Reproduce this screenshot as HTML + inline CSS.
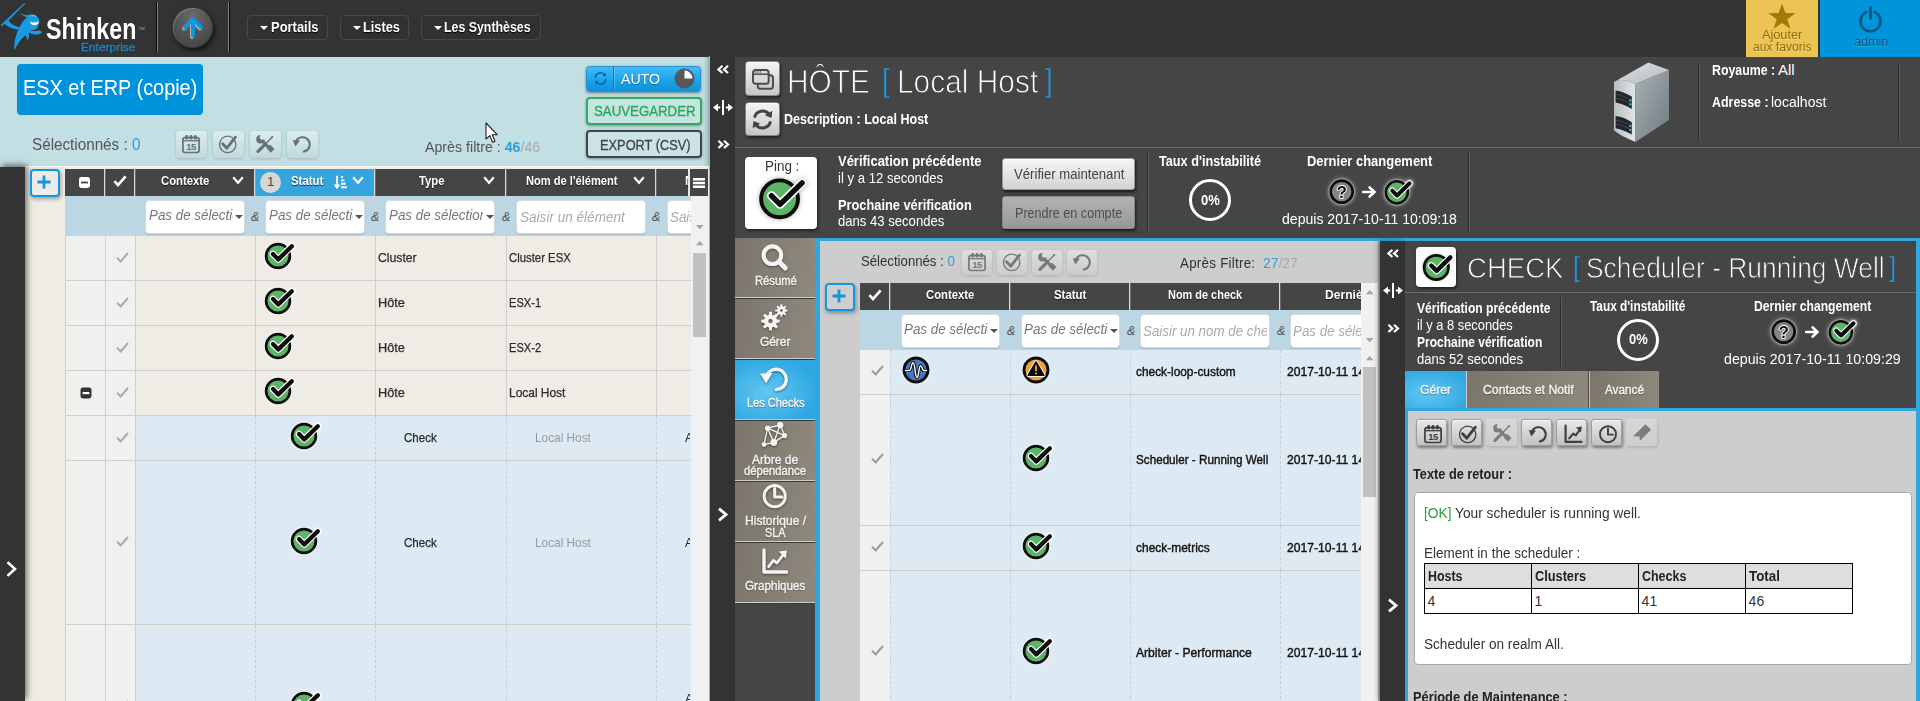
<!DOCTYPE html>
<html lang="fr"><head><meta charset="utf-8"><title>Shinken Enterprise</title>
<style>
html,body{margin:0;padding:0;background:#333;}
body{width:1920px;height:701px;overflow:hidden;font-family:"Liberation Sans",sans-serif;}
#app{position:relative;width:1920px;height:701px;overflow:hidden;background:#333;}
.b{position:absolute;box-sizing:border-box;}
.t{position:absolute;white-space:nowrap;transform-origin:0 50%;display:block;}
.ic{position:absolute;overflow:visible;}
.clip{overflow:hidden;}
.tbl{border-radius:4px;background:linear-gradient(180deg,rgba(255,255,255,.42),rgba(190,205,205,.35));box-shadow:0 1px 3px rgba(0,0,0,.18);}
.tbg{border-radius:4px;background:linear-gradient(180deg,rgba(255,255,255,.35),rgba(200,200,200,.3));box-shadow:0 1px 3px rgba(0,0,0,.15);}
.tbe{border:1px solid #9d9d9d;border-radius:3px;background:linear-gradient(180deg,#e8e8e8,#c2c2c2);box-shadow:1px 2px 3px rgba(0,0,0,.4), inset 0 1px 0 #f8f8f8;}
.tbd{border-radius:3px;background:linear-gradient(180deg,rgba(255,255,255,.22),rgba(200,200,200,.1));box-shadow:1px 2px 3px rgba(0,0,0,.12);}

</style></head>
<body>
<div id="app">
<!-- top bar -->
<div class="b" style="left:0px;top:0px;width:1920px;height:57px;background:#333;"></div>
<svg class="ic" style="left:0px;top:0px" width="46" height="56" viewBox="0 0 46 56" ><path d="M0.4 25.2 L24.6 2.8 L25.4 3.6 L8.6 20.6 C11 24.2 15 26.6 19.6 27.2 C21.8 22.6 24.6 19 27 17.4 C25.2 16.6 22.6 15.6 19.6 12.2 C22.4 14.4 24.6 15 27 15.2 C30.4 13.6 35.4 14.2 38 17.6 C40.4 21 39.4 25.6 36.8 28.2 C34.6 30.4 31.8 30.6 30.2 30.2 C32.6 31.2 36.6 31.4 39 30.6 L42.4 31.8 L41 33.6 L37.4 34.6 C34.2 35 30.8 34 28.6 32.6 C29.6 35 29.4 38 26.8 41 C27.2 38.6 26.8 36.6 25.6 35.4 C21.4 38 17.6 43.6 14.2 50.6 C14 44.6 14.8 38.6 16.8 33.6 C17.4 32 18 30.6 18.6 29.6 C13.4 29.4 8 27 4.6 24 L2 25.8 Z" fill="#189ae2"/><path d="M29.6 21.4 C32.4 23 36 22.8 38.8 21.2 C38.6 23.6 36.6 25.2 34.4 25.2 C32.2 25.2 30.4 23.6 29.6 21.4 Z" fill="#fff"/><path d="M29 16.6 C31.6 14.8 35.2 15 37 16.8 C34.6 15.9 31.8 16 29 16.6 Z" fill="#7fd0ff" opacity=".8"/></svg>
<span class="t" id="t0" style="left:46.00px;top:12.00px;font-size:29px;line-height:35px;color:#fff;font-weight:700;transform:scaleX(0.8009);">Shinken</span>
<span class="t" id="t1" style="left:138.00px;top:26.00px;font-size:7px;line-height:8px;color:#999;transform:scaleX(1.0000);">™</span>
<span class="t" id="t2" style="left:81.00px;top:40.00px;font-size:11.5px;line-height:14px;color:#1b86c4;transform:scaleX(1.0385);-webkit-text-stroke:.3px #1b86c4;">Enterprise</span>
<div class="b" style="left:156px;top:2px;width:2px;height:50px;background:linear-gradient(90deg,#0a0a0a 0,#0a0a0a 50%,#808080 50%);"></div>
<div class="b" style="left:228px;top:2px;width:2px;height:50px;background:linear-gradient(90deg,#808080 0,#808080 50%,#0a0a0a 50%);"></div>
<div class="b" style="left:171.6px;top:6.6px;width:41.8px;height:41.8px;border-radius:50%;background:radial-gradient(circle at 50% 22%,#6a6a6a,#4e4e4e 60%,#444 100%);border:1px solid #3a3a3a;box-shadow:2px 3px 5px rgba(0,0,0,.6), inset 1px 1px 0 rgba(255,255,255,.22);"><svg class="ic" style="left:9px;top:8.6px;filter:drop-shadow(-.6px 1px 0 rgba(200,200,200,.85))" width="22" height="22" viewBox="0 0 22 22"><path d="M11 20 L11 4 M3 11.4 L11 3.2 L19 11.4" fill="none" stroke="#0a96e0" stroke-width="3.8" stroke-linecap="round" stroke-linejoin="miter"/></svg></div>
<div class="b" style="left:247px;top:15px;width:81px;height:25px;border:1px solid #484848;border-radius:4px;background:#313131;"></div>
<svg class="ic" style="left:260.4px;top:26px" width="8" height="4" viewBox="0 0 8 4"><path d="M0 0 L8 0 L4 4 Z" fill="#fff"/></svg>
<span class="t" id="t3" style="left:270.50px;top:18.00px;font-size:15px;line-height:18px;color:#fff;font-weight:700;transform:scaleX(0.8636);text-shadow:0 1px 1px #000;">Portails</span>
<div class="b" style="left:340px;top:15px;width:69px;height:25px;border:1px solid #484848;border-radius:4px;background:#313131;"></div>
<svg class="ic" style="left:353px;top:26px" width="8" height="4" viewBox="0 0 8 4"><path d="M0 0 L8 0 L4 4 Z" fill="#fff"/></svg>
<span class="t" id="t4" style="left:363.00px;top:18.00px;font-size:15px;line-height:18px;color:#fff;font-weight:700;transform:scaleX(0.8488);text-shadow:0 1px 1px #000;">Listes</span>
<div class="b" style="left:421px;top:15px;width:120px;height:25px;border:1px solid #484848;border-radius:4px;background:#313131;"></div>
<svg class="ic" style="left:434px;top:26px" width="8" height="4" viewBox="0 0 8 4"><path d="M0 0 L8 0 L4 4 Z" fill="#fff"/></svg>
<span class="t" id="t5" style="left:444.00px;top:18.00px;font-size:15px;line-height:18px;color:#fff;font-weight:700;transform:scaleX(0.8238);text-shadow:0 1px 1px #000;">Les Synthèses</span>
<div class="b" style="left:1746px;top:0px;width:72px;height:57px;background:#ecc453;"><svg class="ic" style="left:22px;top:3px" width="28" height="27" viewBox="0 0 28 27"><path d="M14 0.6 L17.4 10 L27.4 10.2 L19.4 16.2 L22.4 25.8 L14 20 L5.6 25.8 L8.6 16.2 L0.6 10.2 L10.6 10 Z" fill="#a17a06"/></svg></div>
<span class="t" id="t6" style="left:1762.00px;top:27.00px;font-size:13px;line-height:16px;color:#8d6b05;transform:scaleX(0.9756);text-shadow:0 1px 0 rgba(255,255,255,.35);">Ajouter</span>
<span class="t" id="t7" style="left:1753.00px;top:40.00px;font-size:12.5px;line-height:15px;color:#8d6b05;transform:scaleX(0.9667);text-shadow:0 1px 0 rgba(255,255,255,.35);">aux favoris</span>
<div class="b" style="left:1820px;top:0px;width:100px;height:57px;background:#0094da;"><svg class="ic" style="left:38px;top:5px" width="25" height="28" viewBox="0 0 25 28"><path d="M8.2 7.2 A10 10 0 1 0 16.8 7.2" fill="none" stroke="#08577f" stroke-width="2.6" stroke-linecap="round"/><path d="M12.5 2.2 L12.5 13.4" stroke="#08577f" stroke-width="2.6" stroke-linecap="round"/></svg></div>
<span class="t" id="t8" style="left:1854.00px;top:34.00px;font-size:13px;line-height:16px;color:#08577f;transform:scaleX(0.9714);text-shadow:0 1px 0 rgba(255,255,255,.25);">admin</span>
<!-- left panel -->
<div class="b" style="left:0px;top:57px;width:710px;height:644px;background:#c2dfe3;"></div>
<div class="b" style="left:703px;top:57px;width:7px;height:110px;background:linear-gradient(90deg,rgba(0,0,0,0),rgba(0,0,0,.10) 60%,rgba(0,0,0,.32));"></div>
<div class="b" style="left:17px;top:64px;width:186px;height:51px;background:#0093dc;border-radius:4px;"></div>
<span class="t" id="t9" style="left:23.00px;top:75.00px;font-size:22px;line-height:26px;color:#fff;transform:scaleX(0.9041);">ESX et ERP (copie)</span>
<div class="b" style="left:586px;top:66px;width:115px;height:26px;border-radius:3.5px;background:linear-gradient(180deg,#40bdf8,#1ba3ea 55%,#0c93dc);border:1px solid #2b8fd0;box-shadow:0 1px 3px rgba(0,0,0,.45);"><div class="b" style="left:26px;top:0;width:1px;height:23px;background:#0a76b6;box-shadow:1px 0 0 rgba(255,255,255,.25)"></div><svg class="ic" style="left:6px;top:4px" width="15" height="15" viewBox="0 0 15 15"><path d="M2.2 6.4 A5.4 5.4 0 0 1 12 4.2 M12.8 8.6 A5.4 5.4 0 0 1 3 10.8" fill="none" stroke="#11608f" stroke-width="1.5" stroke-linecap="round"/><path d="M12.9 1.8 L12.6 5.4 L9.4 4.4 Z M2.1 13.2 L2.4 9.6 L5.6 10.6 Z" fill="#11608f"/></svg><svg class="ic" style="left:87px;top:1px" width="21" height="21" viewBox="0 0 21 21"><circle cx="10.5" cy="10.5" r="10" fill="#585858"/><path d="M10.5 10.5 L10.5 2.6 A7.9 7.9 0 0 1 18.4 10.5 Z" fill="#fff"/></svg></div>
<span class="t" id="t10" style="left:621.00px;top:70.00px;font-size:15px;line-height:18px;color:#fff;transform:scaleX(0.9390);text-shadow:0 1px 1px rgba(0,0,0,.4);">AUTO</span>
<div class="b" style="left:586px;top:97px;width:116px;height:28px;border:2.4px solid #2fab5b;border-radius:4px;background:#c6e5e2;box-shadow:0 1px 3px rgba(0,0,0,.35);"></div>
<span class="t" id="t11" style="left:594.00px;top:102.00px;font-size:15px;line-height:18px;color:#2ca85a;transform:scaleX(0.8826);-webkit-text-stroke:.35px #2ca85a;">SAUVEGARDER</span>
<div class="b" style="left:586px;top:130px;width:116px;height:28px;border:2.4px solid #454545;border-radius:4px;background:#c9e3e7;box-shadow:0 1px 3px rgba(0,0,0,.35);"></div>
<span class="t" id="t12" style="left:599.50px;top:136.00px;font-size:15px;line-height:18px;color:#444;transform:scaleX(0.8538);-webkit-text-stroke:.3px #444;">EXPORT (CSV)</span>
<span class="t" id="t13" style="left:32.00px;top:135.00px;font-size:16px;line-height:19px;color:#555;transform:scaleX(0.9518);">Sélectionnés : <span style="color:#2b9fd9">0</span></span>
<span class="t" id="t14" style="left:425.00px;top:138.00px;font-size:15px;line-height:18px;color:#555;transform:scaleX(0.9467);">Après filtre : <span style="color:#2b9fd9;font-weight:700">46</span><span style="color:#a9abab">/46</span></span>
<div class="b tbl" style="left:175.5px;top:131px;width:31px;height:26.5px;"><svg class="ic" style="left:5.5px;top:3.2px" width="20" height="20" viewBox="0 0 20 20"><rect x="1.9" y="3.7" width="16.2" height="14.8" rx="2.2" fill="none" stroke="#617578" stroke-width="1.7"/><path d="M2 6.7 H18" stroke="#617578" stroke-width="1.3"/><rect x="4.3" y="1" width="2.7" height="4.4" rx="1.2" fill="#617578"/><rect x="8.65" y="1" width="2.7" height="4.4" rx="1.2" fill="#617578"/><rect x="13" y="1" width="2.7" height="4.4" rx="1.2" fill="#617578"/><text x="10" y="15.9" text-anchor="middle" font-family="Liberation Sans, sans-serif" font-weight="bold" font-size="9.4" letter-spacing="-.4" fill="#617578">15</text></svg></div>
<div class="b tbl" style="left:212.5px;top:131px;width:31px;height:26.5px;"><svg class="ic" style="left:5.5px;top:3.2px" width="20" height="20" viewBox="0 0 20 20"><circle cx="9.7" cy="10.4" r="8.2" fill="none" stroke="#617578" stroke-width="1.3"/><path d="M4.6 9.8 L8.8 14.2 L17.4 3.2" fill="none" stroke="#617578" stroke-width="2.8" stroke-linecap="round" stroke-linejoin="round"/></svg></div>
<div class="b tbl" style="left:249.5px;top:131px;width:31px;height:26.5px;"><svg class="ic" style="left:5.5px;top:3.2px" width="20" height="20" viewBox="0 0 20 20"><path d="M3 17.4 L10.6 9.8" stroke="#617578" stroke-width="3.2" stroke-linecap="round"/><path d="M10.6 9.8 L17 3.2" stroke="#617578" stroke-width="1.3" stroke-linecap="round"/><circle cx="17.2" cy="3" r="1" fill="#617578"/><path d="M6.4 6 L14.2 14" stroke="#617578" stroke-width="3.2" stroke-linecap="butt"/><path d="M5.4 0.9 A4.3 4.3 0 1 0 9.8 5.4 L6.7 6.3 L4.6 4 Z" fill="#617578"/><rect x="12.4" y="12.2" width="6.2" height="5" transform="rotate(45 15.5 14.7)" fill="#617578"/></svg></div>
<div class="b tbl" style="left:286.5px;top:131px;width:31px;height:26.5px;"><svg class="ic" style="left:5.5px;top:3.2px" width="20" height="20" viewBox="0 0 20 20"><path d="M4 7.4 A7.2 7.2 0 1 1 11.8 17.5" fill="none" stroke="#617578" stroke-width="2.1" stroke-linecap="round"/><path d="M0.8 6.2 L8 6.6 L3.4 12.4 Z" fill="#617578"/></svg></div>
<svg class="ic" style="left:485px;top:122px" width="14" height="22" viewBox="0 0 14 22"><path d="M1 1 L1 17 L4.8 13.6 L7.6 20.2 L10 19.2 L7.2 12.8 L12.2 12.6 Z" fill="#fff" stroke="#222" stroke-width="1.1" stroke-linejoin="round"/></svg>
<div class="b" style="left:25px;top:167px;width:685px;height:534px;background:#efece5;box-shadow:0 -1px 0 #f6f6f3;"></div>
<div class="b" style="left:0px;top:167px;width:25px;height:534px;background:#333;box-shadow:2px -2px 6px rgba(0,0,0,.55);"></div>
<svg class="ic" style="left:6px;top:561px" width="12" height="16" viewBox="0 0 12 16"><path d="M2.4 2 L9 8 L2.4 14" fill="none" stroke="#fff" stroke-width="2.6" stroke-linecap="square" stroke-linejoin="miter"/></svg>
<div class="b" style="left:30px;top:169px;width:30px;height:28px;border:2.6px solid #1497dd;border-radius:4px;background:#ecebe7;box-shadow:1px 2px 4px rgba(0,0,0,.35);"><svg class="ic" style="left:5.4px;top:4.4px" width="14" height="14" viewBox="0 0 14 14"><path d="M7 0.5 L7 13.5 M0.5 7 L13.5 7" stroke="#1497dd" stroke-width="2.8"/></svg></div>
<div class="b clip" style="left:65px;top:169px;width:623px;height:27px;background:#454545;"></div>
<div class="b" style="left:688px;top:169px;width:2px;height:27px;background:#e6e6e4;"></div>
<div class="b" style="left:255px;top:169px;width:120px;height:27px;background:#35a5de;"></div>
<div class="b" style="left:104px;top:169px;width:1px;height:27px;background:#d9d9d9;box-shadow:1px 0 0 rgba(217,217,217,.25);"></div>
<div class="b" style="left:134px;top:169px;width:1px;height:27px;background:#d9d9d9;box-shadow:1px 0 0 rgba(217,217,217,.25);"></div>
<div class="b" style="left:254px;top:169px;width:1px;height:27px;background:#d9d9d9;box-shadow:1px 0 0 rgba(217,217,217,.25);"></div>
<div class="b" style="left:374px;top:169px;width:1px;height:27px;background:#d9d9d9;box-shadow:1px 0 0 rgba(217,217,217,.25);"></div>
<div class="b" style="left:505px;top:169px;width:1px;height:27px;background:#d9d9d9;box-shadow:1px 0 0 rgba(217,217,217,.25);"></div>
<div class="b" style="left:655px;top:169px;width:1px;height:27px;background:#d9d9d9;box-shadow:1px 0 0 rgba(217,217,217,.25);"></div>
<div class="b" style="left:690px;top:169px;width:18px;height:27px;background:#454545;"><svg class="ic" style="left:3px;top:9px" width="12" height="10" viewBox="0 0 12 10"><path d="M0 1.25 H12 M0 5 H12 M0 8.75 H12" stroke="#fff" stroke-width="2.5"/></svg></div>
<svg class="ic" style="left:79px;top:177px" width="11" height="11" viewBox="0 0 11 11"><rect x="0" y="0" width="11" height="11" rx="2.4" fill="#fff"/><rect x="2" y="4.6" width="7" height="1.8" fill="#454545"/></svg>
<svg class="ic" style="left:113px;top:175px" width="14" height="12" viewBox="0 0 14 12"><path d="M1.4 6.2 L5 10 L12.6 1.4" fill="none" stroke="#fff" stroke-width="2.6" stroke-linejoin="miter"/></svg>
<span class="t" id="t15" style="left:161.00px;top:173.00px;font-size:13px;line-height:16px;color:#fff;font-weight:700;transform:scaleX(0.8696);text-shadow:0 1px 1px rgba(0,0,0,.7);">Contexte</span>
<svg class="ic" style="left:232px;top:176px" width="12" height="9" viewBox="0 0 12 9"><path d="M1.2 1.2 L6 6.8 L10.8 1.2" fill="none" stroke="#fff" stroke-width="2.1" stroke-linejoin="miter"/></svg>
<div class="b" style="left:260px;top:171.5px;width:21px;height:21px;border-radius:50%;background:#d6d6d6;"></div>
<span class="t" id="t16" style="left:267.00px;top:174.00px;font-size:13px;line-height:16px;color:#444;transform:scaleX(1.0000);">1</span>
<span class="t" id="t17" style="left:290.50px;top:173.00px;font-size:13px;line-height:16px;color:#fff;font-weight:700;transform:scaleX(0.8784);text-shadow:0 1px 1px rgba(0,0,0,.7);">Statut</span>
<svg class="ic" style="left:334px;top:175px" width="13" height="14" viewBox="0 0 13 14"><path d="M3 0.8 L3 12 M0.6 9.6 L3 12.8 L5.4 9.6" fill="none" stroke="#fff" stroke-width="1.7"/><path d="M7 2 H9 M7 5.4 H10.4 M7 8.8 H11.6 M7 12.2 H12.8" stroke="#fff" stroke-width="1.9"/></svg>
<svg class="ic" style="left:351.5px;top:176px" width="12" height="9" viewBox="0 0 12 9"><path d="M1.2 1.2 L6 6.8 L10.8 1.2" fill="none" stroke="#fff" stroke-width="2.1" stroke-linejoin="miter"/></svg>
<span class="t" id="t18" style="left:419.00px;top:173.00px;font-size:13px;line-height:16px;color:#fff;font-weight:700;transform:scaleX(0.8690);text-shadow:0 1px 1px rgba(0,0,0,.7);">Type</span>
<svg class="ic" style="left:483px;top:176px" width="12" height="9" viewBox="0 0 12 9"><path d="M1.2 1.2 L6 6.8 L10.8 1.2" fill="none" stroke="#fff" stroke-width="2.1" stroke-linejoin="miter"/></svg>
<span class="t" id="t19" style="left:525.80px;top:173.00px;font-size:13px;line-height:16px;color:#fff;font-weight:700;transform:scaleX(0.8542);text-shadow:0 1px 1px rgba(0,0,0,.7);">Nom de l'élément</span>
<svg class="ic" style="left:632.5px;top:176px" width="12" height="9" viewBox="0 0 12 9"><path d="M1.2 1.2 L6 6.8 L10.8 1.2" fill="none" stroke="#fff" stroke-width="2.1" stroke-linejoin="miter"/></svg>
<div class="b clip" style="left:656px;top:169px;width:32px;height:27px;"><span class="t" id="t20" style="left:28.80px;top:4.00px;font-size:13px;line-height:16px;color:#fff;font-weight:700;transform:scaleX(0.9300);text-shadow:0 1px 1px rgba(0,0,0,.7);">Nom</span></div>
<div class="b" style="left:65px;top:196px;width:626px;height:40px;background:#bdd6e3;"></div>
<div class="b" style="left:145.3px;top:200.2px;width:99.5px;height:33.599999999999994px;background:#fff;border-radius:4px;border:1px solid #d5dbde;box-shadow:0 1px 1px rgba(0,0,0,.12);"><div class="b clip" style="left:0;top:0;width:86.5px;height:31.599999999999994px"><span class="t" id="t21" style="left:2.70px;top:5.80px;font-size:14px;line-height:17px;color:#777;font-style:italic;transform:scaleX(0.9550);">Pas de sélection</span></div><svg class="ic" style="left:88.9px;top:13.4px" width="8" height="4" viewBox="0 0 8 4"><path d="M0 0 L8 0 L4 4 Z" fill="#555"/></svg></div>
<span class="t" id="t22" style="left:251.00px;top:210.00px;font-size:12.5px;line-height:15px;color:#555;font-style:italic;transform:scaleX(1.0000);">&amp;</span>
<div class="b" style="left:265.3px;top:200.2px;width:99.5px;height:33.599999999999994px;background:#fff;border-radius:4px;border:1px solid #d5dbde;box-shadow:0 1px 1px rgba(0,0,0,.12);"><div class="b clip" style="left:0;top:0;width:86.5px;height:31.599999999999994px"><span class="t" id="t23" style="left:2.70px;top:5.80px;font-size:14px;line-height:17px;color:#777;font-style:italic;transform:scaleX(0.9550);">Pas de sélection</span></div><svg class="ic" style="left:88.9px;top:13.4px" width="8" height="4" viewBox="0 0 8 4"><path d="M0 0 L8 0 L4 4 Z" fill="#555"/></svg></div>
<span class="t" id="t24" style="left:371.00px;top:210.00px;font-size:12.5px;line-height:15px;color:#555;font-style:italic;transform:scaleX(1.0000);">&amp;</span>
<div class="b" style="left:385.1px;top:200.2px;width:110.39999999999998px;height:33.599999999999994px;background:#fff;border-radius:4px;border:1px solid #d5dbde;box-shadow:0 1px 1px rgba(0,0,0,.12);"><div class="b clip" style="left:0;top:0;width:97.39999999999998px;height:31.599999999999994px"><span class="t" id="t25" style="left:2.70px;top:5.80px;font-size:14px;line-height:17px;color:#777;font-style:italic;transform:scaleX(0.9550);">Pas de sélection</span></div><svg class="ic" style="left:99.79999999999998px;top:13.4px" width="8" height="4" viewBox="0 0 8 4"><path d="M0 0 L8 0 L4 4 Z" fill="#555"/></svg></div>
<span class="t" id="t26" style="left:502.00px;top:210.00px;font-size:12.5px;line-height:15px;color:#555;font-style:italic;transform:scaleX(1.0000);">&amp;</span>
<div class="b" style="left:516.2px;top:200.2px;width:129.5999999999999px;height:33.599999999999994px;background:#fff;border-radius:4px;border:1px solid #d5dbde;box-shadow:0 1px 1px rgba(0,0,0,.12);"><div class="b clip" style="left:0;top:0;width:125.59999999999991px;height:31.599999999999994px"><span class="t" id="t27" style="left:2.40px;top:7.80px;font-size:14.5px;line-height:17px;color:#aaa;font-style:italic;transform:scaleX(0.9357);">Saisir un élément</span></div></div>
<span class="t" id="t28" style="left:652.00px;top:210.00px;font-size:12.5px;line-height:15px;color:#555;font-style:italic;transform:scaleX(1.0000);">&amp;</span>
<div class="b" style="left:666.5px;top:200.2px;width:94.0px;height:33.599999999999994px;background:#fff;border-radius:4px;border:1px solid #d5dbde;box-shadow:0 1px 1px rgba(0,0,0,.12);clip-path:inset(-3px 69.5px -3px -3px);"><div class="b clip" style="left:0;top:0;width:90.0px;height:31.599999999999994px"><span class="t" id="t29" style="left:2.40px;top:7.80px;font-size:14.5px;line-height:17px;color:#aaa;font-style:italic;transform:scaleX(0.9200);">Saisir un nom</span></div></div>
<div class="b" style="left:691px;top:196px;width:17px;height:505px;background:#f1f1f1;"></div>
<svg class="ic" style="left:695.8px;top:225.4px" width="7.5" height="4.2" viewBox="0 0 7.5 4.2"><path d="M0 0 L7.5 0 L3.75 4.2 Z" fill="#a3a3a3"/></svg>
<svg class="ic" style="left:695.8px;top:241.4px" width="7.5" height="4.2" viewBox="0 0 7.5 4.2"><path d="M0 4.2 L3.75 0 L7.5 4.2 Z" fill="#a3a3a3"/></svg>
<div class="b" style="left:693px;top:253px;width:13px;height:84px;background:#c1c1c1;"></div>
<div class="b clip" style="left:65px;top:236px;width:626px;height:465px">
<div class="b" style="left:0;top:0px;width:626px;height:45px;border-bottom:1px solid #cfcfcd;">
<div class="b" style="left:0px;top:0px;width:40px;height:44px;background:#f0f0ee;border-left:1px solid #cfcfcd;"></div>
<div class="b" style="left:40px;top:0px;width:30px;height:44px;background:#f0f0ee;border-left:1px solid #cfcfcd;"></div>
<div class="b" style="left:70px;top:0px;width:556px;height:44px;background:#efece5;border-left:1px solid #cfcfcd;"></div>
<div class="b" style="left:190px;top:0px;width:1px;height:44px;background:#cfcfcd;"></div>
<div class="b" style="left:310px;top:0px;width:1px;height:44px;background:#cfcfcd;"></div>
<div class="b" style="left:441px;top:0px;width:1px;height:44px;background:#cfcfcd;"></div>
<div class="b" style="left:591px;top:0px;width:1px;height:44px;background:#cfcfcd;"></div>
</div>
<div class="b" style="left:0;top:45px;width:626px;height:45px;border-bottom:1px solid #cfcfcd;">
<div class="b" style="left:0px;top:0px;width:40px;height:44px;background:#f0f0ee;border-left:1px solid #cfcfcd;"></div>
<div class="b" style="left:40px;top:0px;width:30px;height:44px;background:#f0f0ee;border-left:1px solid #cfcfcd;"></div>
<div class="b" style="left:70px;top:0px;width:556px;height:44px;background:#efece5;border-left:1px solid #cfcfcd;"></div>
<div class="b" style="left:190px;top:0px;width:1px;height:44px;background:#cfcfcd;"></div>
<div class="b" style="left:310px;top:0px;width:1px;height:44px;background:#cfcfcd;"></div>
<div class="b" style="left:441px;top:0px;width:1px;height:44px;background:#cfcfcd;"></div>
<div class="b" style="left:591px;top:0px;width:1px;height:44px;background:#cfcfcd;"></div>
</div>
<div class="b" style="left:0;top:90px;width:626px;height:45px;border-bottom:1px solid #cfcfcd;">
<div class="b" style="left:0px;top:0px;width:40px;height:44px;background:#f0f0ee;border-left:1px solid #cfcfcd;"></div>
<div class="b" style="left:40px;top:0px;width:30px;height:44px;background:#f0f0ee;border-left:1px solid #cfcfcd;"></div>
<div class="b" style="left:70px;top:0px;width:556px;height:44px;background:#efece5;border-left:1px solid #cfcfcd;"></div>
<div class="b" style="left:190px;top:0px;width:1px;height:44px;background:#cfcfcd;"></div>
<div class="b" style="left:310px;top:0px;width:1px;height:44px;background:#cfcfcd;"></div>
<div class="b" style="left:441px;top:0px;width:1px;height:44px;background:#cfcfcd;"></div>
<div class="b" style="left:591px;top:0px;width:1px;height:44px;background:#cfcfcd;"></div>
</div>
<div class="b" style="left:0;top:135px;width:626px;height:45px;border-bottom:1px solid #cfcfcd;">
<div class="b" style="left:0px;top:0px;width:40px;height:44px;background:#f0f0ee;border-left:1px solid #cfcfcd;"></div>
<div class="b" style="left:40px;top:0px;width:30px;height:44px;background:#f0f0ee;border-left:1px solid #cfcfcd;"></div>
<div class="b" style="left:70px;top:0px;width:556px;height:44px;background:#efece5;border-left:1px solid #cfcfcd;"></div>
<div class="b" style="left:190px;top:0px;width:1px;height:44px;background:#cfcfcd;"></div>
<div class="b" style="left:310px;top:0px;width:1px;height:44px;background:#cfcfcd;"></div>
<div class="b" style="left:441px;top:0px;width:1px;height:44px;background:#cfcfcd;"></div>
<div class="b" style="left:591px;top:0px;width:1px;height:44px;background:#cfcfcd;"></div>
</div>
<div class="b" style="left:0;top:180px;width:626px;height:45px;border-bottom:1px solid #cfcfcd;">
<div class="b" style="left:0px;top:0px;width:40px;height:44px;background:#f0f0ee;border-left:1px solid #cfcfcd;"></div>
<div class="b" style="left:40px;top:0px;width:30px;height:44px;background:#f0f0ee;border-left:1px solid #cfcfcd;"></div>
<div class="b" style="left:70px;top:0px;width:556px;height:44px;background:#ddeaf3;border-left:1px solid #cfcfcd;"></div>
<div class="b" style="left:190px;top:0px;width:0px;height:44px;border-left:1px dashed #c9cfd6;"></div>
<div class="b" style="left:310px;top:0px;width:0px;height:44px;border-left:1px dashed #c9cfd6;"></div>
<div class="b" style="left:441px;top:0px;width:0px;height:44px;border-left:1px dashed #c9cfd6;"></div>
<div class="b" style="left:591px;top:0px;width:0px;height:44px;border-left:1px dashed #c9cfd6;"></div>
</div>
<div class="b" style="left:0;top:225px;width:626px;height:164px;border-bottom:1px solid #cfcfcd;">
<div class="b" style="left:0px;top:0px;width:40px;height:163px;background:#f0f0ee;border-left:1px solid #cfcfcd;"></div>
<div class="b" style="left:40px;top:0px;width:30px;height:163px;background:#f0f0ee;border-left:1px solid #cfcfcd;"></div>
<div class="b" style="left:70px;top:0px;width:556px;height:163px;background:#ddeaf3;border-left:1px solid #cfcfcd;"></div>
<div class="b" style="left:190px;top:0px;width:0px;height:163px;border-left:1px dashed #c9cfd6;"></div>
<div class="b" style="left:310px;top:0px;width:0px;height:163px;border-left:1px dashed #c9cfd6;"></div>
<div class="b" style="left:441px;top:0px;width:0px;height:163px;border-left:1px dashed #c9cfd6;"></div>
<div class="b" style="left:591px;top:0px;width:0px;height:163px;border-left:1px dashed #c9cfd6;"></div>
</div>
<div class="b" style="left:0;top:389px;width:626px;height:164px;border-bottom:1px solid #cfcfcd;">
<div class="b" style="left:0px;top:0px;width:40px;height:163px;background:#f0f0ee;border-left:1px solid #cfcfcd;"></div>
<div class="b" style="left:40px;top:0px;width:30px;height:163px;background:#f0f0ee;border-left:1px solid #cfcfcd;"></div>
<div class="b" style="left:70px;top:0px;width:556px;height:163px;background:#ddeaf3;border-left:1px solid #cfcfcd;"></div>
<div class="b" style="left:190px;top:0px;width:0px;height:163px;border-left:1px dashed #c9cfd6;"></div>
<div class="b" style="left:310px;top:0px;width:0px;height:163px;border-left:1px dashed #c9cfd6;"></div>
<div class="b" style="left:441px;top:0px;width:0px;height:163px;border-left:1px dashed #c9cfd6;"></div>
<div class="b" style="left:591px;top:0px;width:0px;height:163px;border-left:1px dashed #c9cfd6;"></div>
</div>
</div>
<svg class="ic" style="left:115.5px;top:251.5px" width="13" height="11" viewBox="0 0 13 11"><path d="M1 5.6 L4.6 9.4 L12 1" fill="none" stroke="#a9a9a9" stroke-width="2"/></svg>
<svg class="ic" style="left:262.30px;top:234.00px;filter:drop-shadow(0 0 1.6px #fff)" width="40.00" height="40.00" viewBox="0 0 40 40"><circle cx="16" cy="22" r="11.90" fill="#5cb466" stroke="#0d0d0d" stroke-width="2.7"/><path  d="M11 20.1 L16.3 25.4 L29.8 12.2" fill="none" stroke="#fff" stroke-width="6.60" stroke-linecap="round" stroke-linejoin="round"/><path  d="M11 20.1 L16.3 25.4 L29.8 12.2" fill="none" stroke="#0d0d0d" stroke-width="4.30" stroke-linecap="round" stroke-linejoin="round"/></svg>
<span class="t" id="t30" style="left:378.00px;top:250.00px;font-size:13px;line-height:16px;color:#2a2a2a;transform:scaleX(0.9390);-webkit-text-stroke:.25px #2a2a2a;">Cluster</span>
<span class="t" id="t31" style="left:509.00px;top:250.00px;font-size:13px;line-height:16px;color:#2a2a2a;transform:scaleX(0.8732);-webkit-text-stroke:.25px #2a2a2a;">Cluster ESX</span>
<svg class="ic" style="left:115.5px;top:296.5px" width="13" height="11" viewBox="0 0 13 11"><path d="M1 5.6 L4.6 9.4 L12 1" fill="none" stroke="#a9a9a9" stroke-width="2"/></svg>
<svg class="ic" style="left:262.30px;top:279.00px;filter:drop-shadow(0 0 1.6px #fff)" width="40.00" height="40.00" viewBox="0 0 40 40"><circle cx="16" cy="22" r="11.90" fill="#5cb466" stroke="#0d0d0d" stroke-width="2.7"/><path  d="M11 20.1 L16.3 25.4 L29.8 12.2" fill="none" stroke="#fff" stroke-width="6.60" stroke-linecap="round" stroke-linejoin="round"/><path  d="M11 20.1 L16.3 25.4 L29.8 12.2" fill="none" stroke="#0d0d0d" stroke-width="4.30" stroke-linecap="round" stroke-linejoin="round"/></svg>
<span class="t" id="t32" style="left:378.00px;top:295.00px;font-size:13px;line-height:16px;color:#2a2a2a;transform:scaleX(0.9815);-webkit-text-stroke:.25px #2a2a2a;">Hôte</span>
<span class="t" id="t33" style="left:509.00px;top:295.00px;font-size:13px;line-height:16px;color:#2a2a2a;transform:scaleX(0.8553);-webkit-text-stroke:.25px #2a2a2a;">ESX-1</span>
<svg class="ic" style="left:115.5px;top:341.5px" width="13" height="11" viewBox="0 0 13 11"><path d="M1 5.6 L4.6 9.4 L12 1" fill="none" stroke="#a9a9a9" stroke-width="2"/></svg>
<svg class="ic" style="left:262.30px;top:324.00px;filter:drop-shadow(0 0 1.6px #fff)" width="40.00" height="40.00" viewBox="0 0 40 40"><circle cx="16" cy="22" r="11.90" fill="#5cb466" stroke="#0d0d0d" stroke-width="2.7"/><path  d="M11 20.1 L16.3 25.4 L29.8 12.2" fill="none" stroke="#fff" stroke-width="6.60" stroke-linecap="round" stroke-linejoin="round"/><path  d="M11 20.1 L16.3 25.4 L29.8 12.2" fill="none" stroke="#0d0d0d" stroke-width="4.30" stroke-linecap="round" stroke-linejoin="round"/></svg>
<span class="t" id="t34" style="left:378.00px;top:340.00px;font-size:13px;line-height:16px;color:#2a2a2a;transform:scaleX(0.9815);-webkit-text-stroke:.25px #2a2a2a;">Hôte</span>
<span class="t" id="t35" style="left:509.00px;top:340.00px;font-size:13px;line-height:16px;color:#2a2a2a;transform:scaleX(0.8553);-webkit-text-stroke:.25px #2a2a2a;">ESX-2</span>
<svg class="ic" style="left:115.5px;top:386.5px" width="13" height="11" viewBox="0 0 13 11"><path d="M1 5.6 L4.6 9.4 L12 1" fill="none" stroke="#a9a9a9" stroke-width="2"/></svg>
<svg class="ic" style="left:80px;top:387.0px" width="12" height="12" viewBox="0 0 12 12"><rect x="0.5" y="0.5" width="11" height="11" rx="2.4" fill="#333"/><rect x="2.6" y="5" width="6.8" height="2.2" fill="#fff"/></svg>
<svg class="ic" style="left:262.30px;top:369.00px;filter:drop-shadow(0 0 1.6px #fff)" width="40.00" height="40.00" viewBox="0 0 40 40"><circle cx="16" cy="22" r="11.90" fill="#5cb466" stroke="#0d0d0d" stroke-width="2.7"/><path  d="M11 20.1 L16.3 25.4 L29.8 12.2" fill="none" stroke="#fff" stroke-width="6.60" stroke-linecap="round" stroke-linejoin="round"/><path  d="M11 20.1 L16.3 25.4 L29.8 12.2" fill="none" stroke="#0d0d0d" stroke-width="4.30" stroke-linecap="round" stroke-linejoin="round"/></svg>
<span class="t" id="t36" style="left:378.00px;top:385.00px;font-size:13px;line-height:16px;color:#2a2a2a;transform:scaleX(0.9815);-webkit-text-stroke:.25px #2a2a2a;">Hôte</span>
<span class="t" id="t37" style="left:509.00px;top:385.00px;font-size:13px;line-height:16px;color:#2a2a2a;transform:scaleX(0.9180);-webkit-text-stroke:.25px #2a2a2a;">Local Host</span>
<svg class="ic" style="left:115.5px;top:431.5px" width="13" height="11" viewBox="0 0 13 11"><path d="M1 5.6 L4.6 9.4 L12 1" fill="none" stroke="#a9a9a9" stroke-width="2"/></svg>
<svg class="ic" style="left:288.30px;top:414.00px;filter:drop-shadow(0 0 1.6px #fff)" width="40.00" height="40.00" viewBox="0 0 40 40"><circle cx="16" cy="22" r="11.90" fill="#5cb466" stroke="#0d0d0d" stroke-width="2.7"/><path  d="M11 20.1 L16.3 25.4 L29.8 12.2" fill="none" stroke="#fff" stroke-width="6.60" stroke-linecap="round" stroke-linejoin="round"/><path  d="M11 20.1 L16.3 25.4 L29.8 12.2" fill="none" stroke="#0d0d0d" stroke-width="4.30" stroke-linecap="round" stroke-linejoin="round"/></svg>
<span class="t" id="t38" style="left:404.00px;top:430.00px;font-size:13px;line-height:16px;color:#2a2a2a;transform:scaleX(0.8919);-webkit-text-stroke:.25px #2a2a2a;">Check</span>
<span class="t" id="t39" style="left:535.00px;top:430.00px;font-size:13px;line-height:16px;color:#999;transform:scaleX(0.9098);">Local Host</span>
<div class="b clip" style="left:656px;top:428.2px;width:34px;height:20px;"><span class="t" id="t40" style="left:28.80px;top:1.80px;font-size:13px;line-height:16px;color:#222;transform:scaleX(0.9300);">Arbiter</span></div>
<svg class="ic" style="left:115.5px;top:536.0px" width="13" height="11" viewBox="0 0 13 11"><path d="M1 5.6 L4.6 9.4 L12 1" fill="none" stroke="#a9a9a9" stroke-width="2"/></svg>
<svg class="ic" style="left:288.30px;top:518.50px;filter:drop-shadow(0 0 1.6px #fff)" width="40.00" height="40.00" viewBox="0 0 40 40"><circle cx="16" cy="22" r="11.90" fill="#5cb466" stroke="#0d0d0d" stroke-width="2.7"/><path  d="M11 20.1 L16.3 25.4 L29.8 12.2" fill="none" stroke="#fff" stroke-width="6.60" stroke-linecap="round" stroke-linejoin="round"/><path  d="M11 20.1 L16.3 25.4 L29.8 12.2" fill="none" stroke="#0d0d0d" stroke-width="4.30" stroke-linecap="round" stroke-linejoin="round"/></svg>
<span class="t" id="t41" style="left:404.00px;top:535.00px;font-size:13px;line-height:16px;color:#2a2a2a;transform:scaleX(0.8919);-webkit-text-stroke:.25px #2a2a2a;">Check</span>
<span class="t" id="t42" style="left:535.00px;top:535.00px;font-size:13px;line-height:16px;color:#999;transform:scaleX(0.9098);">Local Host</span>
<div class="b clip" style="left:656px;top:532.7px;width:34px;height:20px;"><span class="t" id="t43" style="left:28.80px;top:2.30px;font-size:13px;line-height:16px;color:#222;transform:scaleX(0.9300);">Arbiter</span></div>
<svg class="ic" style="left:115.5px;top:700.0px" width="13" height="11" viewBox="0 0 13 11"><path d="M1 5.6 L4.6 9.4 L12 1" fill="none" stroke="#a9a9a9" stroke-width="2"/></svg>
<svg class="ic" style="left:288.30px;top:682.50px;filter:drop-shadow(0 0 1.6px #fff)" width="40.00" height="40.00" viewBox="0 0 40 40"><circle cx="16" cy="22" r="11.90" fill="#5cb466" stroke="#0d0d0d" stroke-width="2.7"/><path  d="M11 20.1 L16.3 25.4 L29.8 12.2" fill="none" stroke="#fff" stroke-width="6.60" stroke-linecap="round" stroke-linejoin="round"/><path  d="M11 20.1 L16.3 25.4 L29.8 12.2" fill="none" stroke="#0d0d0d" stroke-width="4.30" stroke-linecap="round" stroke-linejoin="round"/></svg>
<span class="t" id="t44" style="left:404.00px;top:699.00px;font-size:13px;line-height:16px;color:#2a2a2a;transform:scaleX(0.8919);-webkit-text-stroke:.25px #2a2a2a;">Check</span>
<span class="t" id="t45" style="left:535.00px;top:699.00px;font-size:13px;line-height:16px;color:#999;transform:scaleX(0.9098);">Local Host</span>
<div class="b clip" style="left:656px;top:689px;width:34px;height:20px;"><span class="t" id="t46" style="left:28.80px;top:2.00px;font-size:13px;line-height:16px;color:#222;transform:scaleX(0.9300);">Arbiter</span></div>
<div class="b" style="left:709px;top:56px;width:1px;height:645px;background:#9fb3b7;"></div>
<!-- splitter -->
<div class="b" style="left:710px;top:56px;width:25px;height:645px;background:#333;"></div>
<svg class="ic" style="left:717px;top:65px" width="12" height="9" viewBox="0 0 12 9"><path d="M5.4 0.8 L1.4 4.4 L5.4 8 M11 0.8 L7 4.4 L11 8" fill="none" stroke="#fff" stroke-width="2.2"/></svg>
<svg class="ic" style="left:713px;top:100px" width="20" height="15" viewBox="0 0 20 15"><path d="M10 0 V15" stroke="#fff" stroke-width="2"/><path d="M2 7.5 H7.2 M12.8 7.5 H18" stroke="#fff" stroke-width="2"/><path d="M0 7.5 L5 3.6 V11.4 Z M20 7.5 L15 3.6 V11.4 Z" fill="#fff"/></svg>
<svg class="ic" style="left:717px;top:140px" width="12" height="9" viewBox="0 0 12 9"><path d="M1.4 0.8 L5.4 4.4 L1.4 8 M7 0.8 L11 4.4 L7 8" fill="none" stroke="#fff" stroke-width="2.2"/></svg>
<svg class="ic" style="left:717px;top:506.5px" width="12" height="15" viewBox="0 0 12 15"><path d="M2 1.6 L9 7.5 L2 13.4" fill="none" stroke="#fff" stroke-width="2.8" stroke-linejoin="miter"/></svg>
<!-- host panel -->
<div class="b" style="left:735px;top:57px;width:1185px;height:644px;background:#454545;"></div>
<div class="b" style="left:745px;top:61px;width:35px;height:34.5px;border:1.5px solid #858585;border-radius:3.5px;background:linear-gradient(180deg,#f4f4f4,#c6c6c6);box-shadow:1px 2px 3px rgba(0,0,0,.5), inset 0 1px 0 #fff;"><svg class="ic" style="left:5.5px;top:7px" width="22" height="21" viewBox="0 0 22 21"><rect x="5.8" y="6.2" width="15.2" height="13.6" rx="2.6" fill="#cdcdcd" stroke="#4a4a4a" stroke-width="1.9"/><rect x="1" y="1" width="15.6" height="13.8" rx="2.6" fill="#dadada" stroke="#4a4a4a" stroke-width="1.9"/><path d="M1 5.2 H16.6" stroke="#4a4a4a" stroke-width="1.5"/><circle cx="3.6" cy="3" r=".8" fill="#555"/><circle cx="6" cy="3" r=".8" fill="#555"/><circle cx="8.4" cy="3" r=".8" fill="#555"/></svg></div>
<div class="b" style="left:745px;top:101.5px;width:35px;height:34px;border:1.5px solid #858585;border-radius:3.5px;background:linear-gradient(180deg,#f4f4f4,#c6c6c6);box-shadow:1px 2px 3px rgba(0,0,0,.5), inset 0 1px 0 #fff;"><svg class="ic" style="left:6px;top:6.5px" width="21" height="21" viewBox="0 0 20 20"><path d="M2.4 8.2 A7.8 7.8 0 0 1 16.4 5.2 M17.6 11.8 A7.8 7.8 0 0 1 3.6 14.8" fill="none" stroke="#444" stroke-width="2.8"/><path d="M19.4 1.6 L18.6 8.6 L12.2 6 Z M0.6 18.4 L1.4 11.4 L7.8 14 Z" fill="#444"/></svg></div>
<span class="t" id="t47" style="left:786.50px;top:61.00px;font-size:34px;line-height:41px;color:#fff;transform:scaleX(0.8777);-webkit-text-stroke:1px #454545;">HÔTE</span>
<span class="t" id="t48" style="left:882.00px;top:62.00px;font-size:31px;line-height:37px;color:#1a98dc;transform:scaleX(0.8889);-webkit-text-stroke:.3px #454545;">[</span>
<span class="t" id="t49" style="left:897.00px;top:61.00px;font-size:34px;line-height:41px;color:#fff;transform:scaleX(0.8789);-webkit-text-stroke:1px #454545;">Local Host</span>
<span class="t" id="t50" style="left:1044.60px;top:62.00px;font-size:31px;line-height:37px;color:#1a98dc;transform:scaleX(0.8889);-webkit-text-stroke:.3px #454545;">]</span>
<span class="t" id="t51" style="left:783.80px;top:110.00px;font-size:15px;line-height:18px;color:#fff;font-weight:700;transform:scaleX(0.8364);">Description : Local Host</span>
<svg class="ic" style="left:1612.5px;top:61.5px" width="57" height="81" viewBox="0 0 57 81" ><defs><linearGradient id="sv1" x1="0" y1="0" x2="1" y2="0"><stop offset="0" stop-color="#b9c0c2"/><stop offset="1" stop-color="#e1e5e6"/></linearGradient><linearGradient id="sv2" x1="0" y1="0" x2="1" y2="1"><stop offset="0" stop-color="#a9b1b4"/><stop offset="1" stop-color="#6f7a7f"/></linearGradient><linearGradient id="sv3" x1="0" y1="0" x2="1" y2="1"><stop offset="0" stop-color="#dfe3e4"/><stop offset="1" stop-color="#b4bbbd"/></linearGradient></defs><path d="M1 20 C6 17 12 17.4 22.4 22 L22.4 80 C14 76 6 73 1 68 Z" fill="url(#sv1)"/><path d="M22.4 22 L56 8 L56 58 L22.4 80 Z" fill="url(#sv2)"/><path d="M1 20 L35.4 0.6 L56 8 L22.4 22 C12 17.4 6 17 1 20 Z" fill="url(#sv3)"/><path d="M2.6 28.4 C8 29 14 31.4 18.8 34.6 L18.8 47 C14 44 8 41.6 2.6 40.6 Z" fill="#22262a"/><path d="M2.6 54 C8 54.6 14 57 18.8 60.2 L18.8 72.6 C14 69.6 8 67.2 2.6 66.2 Z" fill="#22262a"/><path d="M2.6 32.4 C8 33 14 35.4 18.8 38.6 M2.6 36.4 C8 37 14 39.4 18.8 42.6 M2.6 58 C8 58.6 14 61 18.8 64.2 M2.6 62 C8 62.6 14 65 18.8 68.2" stroke="#4a5056" stroke-width=".8" fill="none"/><rect x="16.4" y="37.6" width="1.8" height="1.8" fill="#5fc3f2"/><rect x="16.4" y="41.4" width="1.8" height="1.8" fill="#5fc3f2"/><rect x="16.4" y="63.2" width="1.8" height="1.8" fill="#5fc3f2"/><rect x="16.4" y="67" width="1.8" height="1.8" fill="#5fc3f2"/></svg>
<div class="b" style="left:1698px;top:61.5px;width:2px;height:79px;background:linear-gradient(90deg,#2e2e2e 50%,#5a5a5a 50%);"></div>
<div class="b" style="left:1898px;top:61.5px;width:2px;height:79px;background:linear-gradient(90deg,#2e2e2e 50%,#5a5a5a 50%);"></div>
<span class="t" id="t52" style="left:1712.00px;top:61.00px;font-size:15px;line-height:18px;color:#fff;font-weight:700;transform:scaleX(0.8247);">Royaume :</span>
<span class="t" id="t53" style="left:1778.00px;top:61.00px;font-size:15px;line-height:18px;color:#fff;transform:scaleX(1.0000);">All</span>
<span class="t" id="t54" style="left:1712.00px;top:93.00px;font-size:15px;line-height:18px;color:#fff;font-weight:700;transform:scaleX(0.8279);">Adresse :</span>
<span class="t" id="t55" style="left:1771.00px;top:93.00px;font-size:15px;line-height:18px;color:#fff;transform:scaleX(0.9356);">localhost</span>
<div class="b" style="left:735px;top:147px;width:1185px;height:1px;background:#6a6a6a;"></div>
<div class="b" style="left:745px;top:157px;width:72px;height:72px;background:#fff;border-radius:4px;box-shadow:1px 2px 3px rgba(0,0,0,.5);"></div>
<span class="t" id="t56" style="left:764.50px;top:157.00px;font-size:15px;line-height:18px;color:#333;transform:scaleX(0.8947);">Ping :</span>
<svg class="ic" style="left:755.41px;top:164.89px;filter:drop-shadow(0 0 2.5px #aaa)" width="61.48" height="61.48" viewBox="0 0 40 40"><circle cx="16" cy="22" r="12.00" fill="#5cb466" stroke="#0d0d0d" stroke-width="2.5"/><path transform="translate(16 22) scale(1.06) translate(-16 -22)" d="M11 20.1 L16.3 25.4 L29.8 12.2" fill="none" stroke="#fff" stroke-width="5.50" stroke-linecap="round" stroke-linejoin="round"/><path transform="translate(16 22) scale(1.06) translate(-16 -22)" d="M11 20.1 L16.3 25.4 L29.8 12.2" fill="none" stroke="#0d0d0d" stroke-width="3.33" stroke-linecap="round" stroke-linejoin="round"/></svg>
<span class="t" id="t57" style="left:837.50px;top:152.00px;font-size:15px;line-height:18px;color:#fff;font-weight:700;transform:scaleX(0.8645);">Vérification précédente</span>
<span class="t" id="t58" style="left:837.50px;top:169.00px;font-size:15px;line-height:18px;color:#fff;transform:scaleX(0.8750);">il y a 12 secondes</span>
<span class="t" id="t59" style="left:837.50px;top:196.00px;font-size:15px;line-height:18px;color:#fff;font-weight:700;transform:scaleX(0.8535);">Prochaine vérification</span>
<span class="t" id="t60" style="left:837.50px;top:212.00px;font-size:15px;line-height:18px;color:#fff;transform:scaleX(0.8730);">dans 43 secondes</span>
<div class="b" style="left:1001.5px;top:157.5px;width:133.5px;height:32.5px;border:1px solid #9a9a9a;border-radius:3px;background:linear-gradient(180deg,#f6f6f6,#d2d2d2);box-shadow:1px 2px 3px rgba(0,0,0,.6), inset 0 1px 0 #fff;"></div>
<span class="t" id="t61" style="left:1013.50px;top:165.00px;font-size:15px;line-height:18px;color:#444;transform:scaleX(0.8770);">Vérifier maintenant</span>
<div class="b" style="left:1001.5px;top:196px;width:133.5px;height:33px;border:1px solid #8a8a8a;border-radius:3px;background:linear-gradient(180deg,#b2b2b2,#979797);box-shadow:1px 2px 3px rgba(0,0,0,.6);"></div>
<span class="t" id="t62" style="left:1015.00px;top:204.00px;font-size:15px;line-height:18px;color:#4d4d4d;transform:scaleX(0.8398);">Prendre en compte</span>
<div class="b" style="left:1147px;top:152px;width:2px;height:80px;background:linear-gradient(90deg,#2e2e2e 50%,#5a5a5a 50%);"></div>
<div class="b" style="left:1468px;top:152px;width:2px;height:80px;background:linear-gradient(90deg,#2e2e2e 50%,#5a5a5a 50%);"></div>
<span class="t" id="t63" style="left:1158.70px;top:152.00px;font-size:15px;line-height:18px;color:#fff;font-weight:700;transform:scaleX(0.8455);">Taux d'instabilité</span>
<div class="b" style="left:1189px;top:179px;width:42px;height:42px;border:3px solid #fff;border-radius:50%;"></div>
<span class="t" id="t64" style="left:1200.50px;top:191.00px;font-size:15px;line-height:18px;color:#fff;font-weight:700;transform:scaleX(0.8636);">0%</span>
<span class="t" id="t65" style="left:1306.70px;top:152.00px;font-size:15px;line-height:18px;color:#fff;font-weight:700;transform:scaleX(0.8641);">Dernier changement</span>
<svg class="ic" style="left:1327.30px;top:177.00px;filter:drop-shadow(0 0 .8px rgba(255,255,255,.9)) drop-shadow(0 0 2.6px rgba(255,255,255,.5))" width="29.39" height="29.39" viewBox="0 0 32 32"><circle cx="16" cy="16" r="12" fill="#858585" stroke="#0d0d0d" stroke-width="2.9"/><text x="16" y="22.6" text-anchor="middle" font-family="Liberation Sans, sans-serif" font-weight="bold" font-size="18" fill="#0d0d0d" stroke="#fff" stroke-width="2" paint-order="stroke" stroke-linejoin="round">?</text></svg>
<svg class="ic" style="left:1362px;top:185px" width="15" height="14" viewBox="0 0 15 14"><path d="M1.2 7 H11.4 M7.6 2.4 L12.4 7 L7.6 11.6" fill="none" stroke="#fff" stroke-width="2.7" stroke-linecap="round" stroke-linejoin="miter"/></svg>
<svg class="ic" style="left:1382.39px;top:171.93px;filter:drop-shadow(0 0 .8px rgba(255,255,255,.9)) drop-shadow(0 0 2.6px rgba(255,255,255,.5))" width="37.04" height="37.04" viewBox="0 0 40 40"><circle cx="16" cy="22" r="11.90" fill="#5cb466" stroke="#0d0d0d" stroke-width="2.7"/><path  d="M11 20.1 L16.3 25.4 L29.8 12.2" fill="none" stroke="#fff" stroke-width="6.60" stroke-linecap="round" stroke-linejoin="round"/><path  d="M11 20.1 L16.3 25.4 L29.8 12.2" fill="none" stroke="#0d0d0d" stroke-width="4.30" stroke-linecap="round" stroke-linejoin="round"/></svg>
<span class="t" id="t66" style="left:1281.70px;top:210.00px;font-size:15px;line-height:18px;color:#fff;transform:scaleX(0.9374);">depuis 2017-10-11 10:09:18</span>
<!-- side menu -->
<div class="b" style="left:735px;top:238px;width:80px;height:59px;background:linear-gradient(97deg,#7c756b,#8f887d);"></div>
<div class="b" style="left:735px;top:297px;width:80px;height:1px;background:#d3cec6;"></div>
<div class="b" style="left:735px;top:298px;width:80px;height:1px;background:#3a3835;"></div>
<div class="b" style="left:735px;top:299px;width:80px;height:59px;background:linear-gradient(97deg,#7c756b,#8f887d);"></div>
<div class="b" style="left:735px;top:358px;width:80px;height:1px;background:#d3cec6;"></div>
<div class="b" style="left:735px;top:359px;width:80px;height:1px;background:#3a3835;"></div>
<div class="b" style="left:735px;top:360px;width:80px;height:59px;background:radial-gradient(ellipse at 40% 55%,#62c7f3,#2fa8e2 75%);"></div>
<div class="b" style="left:735px;top:419px;width:80px;height:1px;background:#8fd6f5;"></div>
<div class="b" style="left:735px;top:420px;width:80px;height:1px;background:#3a3835;"></div>
<div class="b" style="left:735px;top:421px;width:80px;height:59px;background:linear-gradient(97deg,#7c756b,#8f887d);"></div>
<div class="b" style="left:735px;top:480px;width:80px;height:1px;background:#d3cec6;"></div>
<div class="b" style="left:735px;top:481px;width:80px;height:1px;background:#3a3835;"></div>
<div class="b" style="left:735px;top:482px;width:80px;height:59px;background:linear-gradient(97deg,#7c756b,#8f887d);"></div>
<div class="b" style="left:735px;top:541px;width:80px;height:1px;background:#d3cec6;"></div>
<div class="b" style="left:735px;top:542px;width:80px;height:1px;background:#3a3835;"></div>
<div class="b" style="left:735px;top:543px;width:80px;height:59px;background:linear-gradient(97deg,#7c756b,#8f887d);"></div>
<div class="b" style="left:735px;top:602px;width:80px;height:1px;background:#d3cec6;"></div>
<div class="b" style="left:735px;top:603px;width:80px;height:1px;background:#3a3835;"></div>
<div class="b" style="left:735px;top:604px;width:80px;height:97px;background:#454545;"></div>
<svg class="ic" style="left:735px;top:238px;filter:drop-shadow(0 1px 1px rgba(0,0,0,.45));" width="80" height="366" viewBox="735 238 80 366"><circle cx="772.4" cy="255.2" r="8.8" fill="none" stroke="#f4f4f4" stroke-width="4.2"/><path d="M779.8 262.6 L785.2 268" stroke="#f4f4f4" stroke-width="5" stroke-linecap="round"/><path d="M776.92 319.56 L779.78 319.63 L779.78 322.57 L776.92 322.64 L776.13 324.55 L778.10 326.63 L776.03 328.70 L773.95 326.73 L772.04 327.52 L771.97 330.38 L769.03 330.38 L768.96 327.52 L767.05 326.73 L764.97 328.70 L762.90 326.63 L764.87 324.55 L764.08 322.64 L761.22 322.57 L761.22 319.63 L764.08 319.56 L764.87 317.65 L762.90 315.57 L764.97 313.50 L767.05 315.47 L768.96 314.68 L769.03 311.82 L771.97 311.82 L772.04 314.68 L773.95 315.47 L776.03 313.50 L778.10 315.57 L776.13 317.65 Z M772.7 321.1 A2.2 2.2 0 1 0 768.3 321.1 A2.2 2.2 0 1 0 772.7 321.1 Z" fill="#f4f4f4" fill-rule="evenodd"/><path d="M785.68 309.47 L787.62 309.51 L787.62 311.49 L785.68 311.53 L785.15 312.80 L786.50 314.20 L785.10 315.60 L783.70 314.25 L782.43 314.78 L782.39 316.72 L780.41 316.72 L780.37 314.78 L779.10 314.25 L777.70 315.60 L776.30 314.20 L777.65 312.80 L777.12 311.53 L775.18 311.49 L775.18 309.51 L777.12 309.47 L777.65 308.20 L776.30 306.80 L777.70 305.40 L779.10 306.75 L780.37 306.22 L780.41 304.28 L782.39 304.28 L782.43 306.22 L783.70 306.75 L785.10 305.40 L786.50 306.80 L785.15 308.20 Z M782.6999999999999 310.5 A1.3 1.3 0 1 0 780.1 310.5 A1.3 1.3 0 1 0 782.6999999999999 310.5 Z" fill="#f4f4f4" fill-rule="evenodd"/><path d="M766.4 376.4 A10.2 10.2 0 1 1 776.4 389.6" fill="none" stroke="#f4f4f4" stroke-width="3.4" stroke-linecap="round"/><path d="M760 373.4 L772.6 373 L766 383.6 Z" fill="#f4f4f4"/><path d="M767.6 428.2 L780.2 425 M780.2 425 L784.6 435.6 M784.6 435.6 L773.8 442.4 M773.8 442.4 L764 444.6 M764 444.6 L767.6 428.2 M767.6 428.2 L773.8 442.4 M767.6 428.2 L784.6 435.6 M780.2 425 L773.8 442.4" stroke="#f4f4f4" stroke-width="1.3" fill="none"/><circle cx="767.6" cy="428.2" r="2.6" fill="#f4f4f4"/><circle cx="780.2" cy="425" r="3.2" fill="#f4f4f4"/><circle cx="784.6" cy="435.6" r="2.6" fill="#f4f4f4"/><circle cx="773.8" cy="442.4" r="3.4" fill="#f4f4f4"/><circle cx="764" cy="444.6" r="2.4" fill="#f4f4f4"/><circle cx="774.7" cy="496.2" r="10.6" fill="none" stroke="#f4f4f4" stroke-width="3"/><path d="M774.7 488.6 V497 H782" fill="none" stroke="#f4f4f4" stroke-width="3" stroke-linecap="round" stroke-linejoin="round"/><path d="M764 550 V572 H786.6" fill="none" stroke="#f4f4f4" stroke-width="3.4" stroke-linecap="round" stroke-linejoin="round"/><path d="M768.6 566.6 L773.4 560.4 L777 563 L783 555" fill="none" stroke="#f4f4f4" stroke-width="2.8" stroke-linecap="round" stroke-linejoin="round"/><path d="M778.6 551.6 L787 550.4 L785.8 558.8 Z" fill="#f4f4f4"/></svg>
<span class="t" id="t67" style="left:755.00px;top:273.00px;font-size:13px;line-height:16px;color:#f4f4f4;transform:scaleX(0.8646);text-shadow:0 1px 1px rgba(0,0,0,.55);-webkit-text-stroke:.4px #f4f4f4;">Résumé</span>
<span class="t" id="t68" style="left:760.00px;top:334.00px;font-size:13px;line-height:16px;color:#f4f4f4;transform:scaleX(0.9152);text-shadow:0 1px 1px rgba(0,0,0,.55);-webkit-text-stroke:.4px #f4f4f4;">Gérer</span>
<span class="t" id="t69" style="left:746.70px;top:395.00px;font-size:13px;line-height:16px;color:#f4f4f4;transform:scaleX(0.8456);text-shadow:0 1px 1px rgba(0,0,0,.55);-webkit-text-stroke:.4px #f4f4f4;">Les Checks</span>
<span class="t" id="t70" style="left:752.00px;top:452.00px;font-size:13px;line-height:16px;color:#f4f4f4;transform:scaleX(0.9280);text-shadow:0 1px 1px rgba(0,0,0,.55);-webkit-text-stroke:.4px #f4f4f4;">Arbre de</span>
<span class="t" id="t71" style="left:743.60px;top:463.00px;font-size:13px;line-height:16px;color:#f4f4f4;transform:scaleX(0.8667);text-shadow:0 1px 1px rgba(0,0,0,.55);-webkit-text-stroke:.4px #f4f4f4;">dépendance</span>
<span class="t" id="t72" style="left:744.70px;top:513.00px;font-size:13px;line-height:16px;color:#f4f4f4;transform:scaleX(0.9288);text-shadow:0 1px 1px rgba(0,0,0,.55);-webkit-text-stroke:.4px #f4f4f4;">Historique /</span>
<span class="t" id="t73" style="left:764.50px;top:525.00px;font-size:13px;line-height:16px;color:#f4f4f4;transform:scaleX(0.8360);text-shadow:0 1px 1px rgba(0,0,0,.55);-webkit-text-stroke:.4px #f4f4f4;">SLA</span>
<span class="t" id="t74" style="left:745.40px;top:578.00px;font-size:13px;line-height:16px;color:#f4f4f4;transform:scaleX(0.8970);text-shadow:0 1px 1px rgba(0,0,0,.55);-webkit-text-stroke:.4px #f4f4f4;">Graphiques</span>
<!-- checks list -->
<div class="b" style="left:815px;top:238px;width:1105px;height:463px;background:#2fa8e2;"></div>
<div class="b" style="left:820px;top:241px;width:560px;height:460px;background:#cdcdcd;"></div>
<span class="t" id="t75" style="left:861.00px;top:252.00px;font-size:15px;line-height:18px;color:#333;transform:scaleX(0.8785);">Sélectionnés : <span style="color:#2b9fd9">0</span></span>
<div class="b tbg" style="left:962px;top:249.5px;width:30px;height:25px;"><svg class="ic" style="left:5.0px;top:2.5px" width="20" height="20" viewBox="0 0 20 20"><rect x="1.9" y="3.7" width="16.2" height="14.8" rx="2.2" fill="none" stroke="#787878" stroke-width="1.7"/><path d="M2 6.7 H18" stroke="#787878" stroke-width="1.3"/><rect x="4.3" y="1" width="2.7" height="4.4" rx="1.2" fill="#787878"/><rect x="8.65" y="1" width="2.7" height="4.4" rx="1.2" fill="#787878"/><rect x="13" y="1" width="2.7" height="4.4" rx="1.2" fill="#787878"/><text x="10" y="15.9" text-anchor="middle" font-family="Liberation Sans, sans-serif" font-weight="bold" font-size="9.4" letter-spacing="-.4" fill="#787878">15</text></svg></div>
<div class="b tbg" style="left:997px;top:249.5px;width:30px;height:25px;"><svg class="ic" style="left:5.0px;top:2.5px" width="20" height="20" viewBox="0 0 20 20"><circle cx="9.7" cy="10.4" r="8.2" fill="none" stroke="#787878" stroke-width="1.3"/><path d="M4.6 9.8 L8.8 14.2 L17.4 3.2" fill="none" stroke="#787878" stroke-width="2.8" stroke-linecap="round" stroke-linejoin="round"/></svg></div>
<div class="b tbg" style="left:1032px;top:249.5px;width:30px;height:25px;"><svg class="ic" style="left:5.0px;top:2.5px" width="20" height="20" viewBox="0 0 20 20"><path d="M3 17.4 L10.6 9.8" stroke="#787878" stroke-width="3.2" stroke-linecap="round"/><path d="M10.6 9.8 L17 3.2" stroke="#787878" stroke-width="1.3" stroke-linecap="round"/><circle cx="17.2" cy="3" r="1" fill="#787878"/><path d="M6.4 6 L14.2 14" stroke="#787878" stroke-width="3.2" stroke-linecap="butt"/><path d="M5.4 0.9 A4.3 4.3 0 1 0 9.8 5.4 L6.7 6.3 L4.6 4 Z" fill="#787878"/><rect x="12.4" y="12.2" width="6.2" height="5" transform="rotate(45 15.5 14.7)" fill="#787878"/></svg></div>
<div class="b tbg" style="left:1067px;top:249.5px;width:30px;height:25px;"><svg class="ic" style="left:5.0px;top:2.5px" width="20" height="20" viewBox="0 0 20 20"><path d="M4 7.4 A7.2 7.2 0 1 1 11.8 17.5" fill="none" stroke="#787878" stroke-width="2.1" stroke-linecap="round"/><path d="M0.8 6.2 L8 6.6 L3.4 12.4 Z" fill="#787878"/></svg></div>
<span class="t" id="t76" style="left:1179.80px;top:254.00px;font-size:15px;line-height:18px;color:#333;transform:scaleX(0.8887);letter-spacing:.3px;">Après Filtre:&nbsp; <span style="color:#2b9fd9">27</span><span style="color:#a9a9a9">/27</span></span>
<div class="b" style="left:825px;top:283px;width:30px;height:28px;border:2.6px solid #1497dd;border-radius:4px;background:#cfcfcf;box-shadow:1px 2px 4px rgba(0,0,0,.35);"><svg class="ic" style="left:5.4px;top:4.4px" width="14" height="14" viewBox="0 0 14 14"><path d="M7 0.5 L7 13.5 M0.5 7 L13.5 7" stroke="#1497dd" stroke-width="2.8"/></svg></div>
<div class="b" style="left:860px;top:283px;width:501px;height:27px;background:#454545;"></div>
<div class="b" style="left:889px;top:283px;width:1px;height:27px;background:#d9d9d9;box-shadow:1px 0 0 rgba(217,217,217,.25);"></div>
<div class="b" style="left:1009px;top:283px;width:1px;height:27px;background:#d9d9d9;box-shadow:1px 0 0 rgba(217,217,217,.25);"></div>
<div class="b" style="left:1129px;top:283px;width:1px;height:27px;background:#d9d9d9;box-shadow:1px 0 0 rgba(217,217,217,.25);"></div>
<div class="b" style="left:1279px;top:283px;width:1px;height:27px;background:#d9d9d9;box-shadow:1px 0 0 rgba(217,217,217,.25);"></div>
<svg class="ic" style="left:868px;top:289px" width="14" height="12" viewBox="0 0 14 12"><path d="M1.4 6.2 L5 10 L12.6 1.4" fill="none" stroke="#fff" stroke-width="2.6" stroke-linejoin="miter"/></svg>
<span class="t" id="t77" style="left:925.50px;top:287.00px;font-size:13px;line-height:16px;color:#fff;font-weight:700;transform:scaleX(0.8661);text-shadow:0 1px 1px rgba(0,0,0,.7);">Contexte</span>
<span class="t" id="t78" style="left:1053.50px;top:287.00px;font-size:13px;line-height:16px;color:#fff;font-weight:700;transform:scaleX(0.8784);text-shadow:0 1px 1px rgba(0,0,0,.7);">Statut</span>
<span class="t" id="t79" style="left:1168.00px;top:287.00px;font-size:13px;line-height:16px;color:#fff;font-weight:700;transform:scaleX(0.8409);text-shadow:0 1px 1px rgba(0,0,0,.7);">Nom de check</span>
<div class="b clip" style="left:1281px;top:283px;width:80px;height:27px;"><span class="t" id="t80" style="left:44.40px;top:4.00px;font-size:13px;line-height:16px;color:#fff;font-weight:700;transform:scaleX(0.9300);text-shadow:0 1px 1px rgba(0,0,0,.7);">Dernière</span></div>
<div class="b" style="left:860px;top:310px;width:501px;height:40px;background:#bdd6e3;"></div>
<div class="b" style="left:900.5px;top:314.40000000000003px;width:99.29999999999995px;height:33.19999999999999px;background:#fff;border-radius:4px;border:1px solid #d5dbde;box-shadow:0 1px 1px rgba(0,0,0,.12);"><div class="b clip" style="left:0;top:0;width:86.29999999999995px;height:31.19999999999999px"><span class="t" id="t81" style="left:2.70px;top:5.60px;font-size:14px;line-height:17px;color:#777;font-style:italic;transform:scaleX(0.9550);">Pas de sélection</span></div><svg class="ic" style="left:88.69999999999996px;top:13.4px" width="8" height="4" viewBox="0 0 8 4"><path d="M0 0 L8 0 L4 4 Z" fill="#555"/></svg></div>
<span class="t" id="t82" style="left:1007.00px;top:324.00px;font-size:12.5px;line-height:15px;color:#555;font-style:italic;transform:scaleX(1.0000);">&amp;</span>
<div class="b" style="left:1020.5px;top:314.40000000000003px;width:99.29999999999995px;height:33.19999999999999px;background:#fff;border-radius:4px;border:1px solid #d5dbde;box-shadow:0 1px 1px rgba(0,0,0,.12);"><div class="b clip" style="left:0;top:0;width:86.29999999999995px;height:31.19999999999999px"><span class="t" id="t83" style="left:2.70px;top:5.60px;font-size:14px;line-height:17px;color:#777;font-style:italic;transform:scaleX(0.9550);">Pas de sélection</span></div><svg class="ic" style="left:88.69999999999996px;top:13.4px" width="8" height="4" viewBox="0 0 8 4"><path d="M0 0 L8 0 L4 4 Z" fill="#555"/></svg></div>
<span class="t" id="t84" style="left:1127.00px;top:324.00px;font-size:12.5px;line-height:15px;color:#555;font-style:italic;transform:scaleX(1.0000);">&amp;</span>
<div class="b" style="left:1140.0px;top:314.40000000000003px;width:129.79999999999995px;height:33.19999999999999px;background:#fff;border-radius:4px;border:1px solid #d5dbde;box-shadow:0 1px 1px rgba(0,0,0,.12);"><div class="b clip" style="left:0;top:0;width:125.79999999999995px;height:31.19999999999999px"><span class="t" id="t85" style="left:2.40px;top:7.60px;font-size:14.5px;line-height:17px;color:#aaa;font-style:italic;transform:scaleX(0.9200);">Saisir un nom de check</span></div></div>
<span class="t" id="t86" style="left:1277.00px;top:324.00px;font-size:12.5px;line-height:15px;color:#555;font-style:italic;transform:scaleX(1.0000);">&amp;</span>
<div class="b" style="left:1290.0px;top:314.40000000000003px;width:100.5px;height:33.19999999999999px;background:#fff;border-radius:4px;border:1px solid #d5dbde;box-shadow:0 1px 1px rgba(0,0,0,.12);clip-path:inset(-3px 29.5px -3px -3px);"><div class="b clip" style="left:0;top:0;width:96.5px;height:31.19999999999999px"><span class="t" id="t87" style="left:2.40px;top:7.60px;font-size:14.5px;line-height:17px;color:#aaa;font-style:italic;transform:scaleX(0.9200);">Pas de sélection</span></div></div>
<div class="b" style="left:1361px;top:283px;width:17px;height:418px;background:#f1f1f1;"></div>
<svg class="ic" style="left:1365.8px;top:290.4px" width="7.5" height="4.2" viewBox="0 0 7.5 4.2"><path d="M0 4.2 L3.75 0 L7.5 4.2 Z" fill="#a3a3a3"/></svg>
<svg class="ic" style="left:1365.8px;top:338.4px" width="7.5" height="4.2" viewBox="0 0 7.5 4.2"><path d="M0 0 L7.5 0 L3.75 4.2 Z" fill="#a3a3a3"/></svg>
<svg class="ic" style="left:1365.8px;top:356.4px" width="7.5" height="4.2" viewBox="0 0 7.5 4.2"><path d="M0 4.2 L3.75 0 L7.5 4.2 Z" fill="#a3a3a3"/></svg>
<div class="b" style="left:1363px;top:367px;width:13px;height:130px;background:#c1c1c1;"></div>
<div class="b" style="left:1378px;top:241px;width:2px;height:460px;background:linear-gradient(90deg,#bdbdbd,#999);"></div>
<div class="b clip" style="left:860px;top:350px;width:501px;height:351px">
<div class="b" style="left:0;top:0px;width:501px;height:45px;border-bottom:1px solid #cfcfcd;">
<div class="b" style="left:0px;top:0px;width:30px;height:44px;background:#f0f0ee;"></div>
<div class="b" style="left:30px;top:0px;width:471px;height:44px;background:#ddeaf3;"></div>
<div class="b" style="left:30px;top:0px;width:0px;height:44px;border-left:1px dashed #c9cfd6;"></div>
<div class="b" style="left:150px;top:0px;width:0px;height:44px;border-left:1px dashed #c9cfd6;"></div>
<div class="b" style="left:270px;top:0px;width:0px;height:44px;border-left:1px dashed #c9cfd6;"></div>
<div class="b" style="left:420px;top:0px;width:0px;height:44px;border-left:1px dashed #c9cfd6;"></div>
</div>
<div class="b" style="left:0;top:45px;width:501px;height:131px;border-bottom:1px solid #cfcfcd;">
<div class="b" style="left:0px;top:0px;width:30px;height:130px;background:#f0f0ee;"></div>
<div class="b" style="left:30px;top:0px;width:471px;height:130px;background:#ddeaf3;"></div>
<div class="b" style="left:30px;top:0px;width:0px;height:130px;border-left:1px dashed #c9cfd6;"></div>
<div class="b" style="left:150px;top:0px;width:0px;height:130px;border-left:1px dashed #c9cfd6;"></div>
<div class="b" style="left:270px;top:0px;width:0px;height:130px;border-left:1px dashed #c9cfd6;"></div>
<div class="b" style="left:420px;top:0px;width:0px;height:130px;border-left:1px dashed #c9cfd6;"></div>
</div>
<div class="b" style="left:0;top:176px;width:501px;height:45px;border-bottom:1px solid #cfcfcd;">
<div class="b" style="left:0px;top:0px;width:30px;height:44px;background:#f0f0ee;"></div>
<div class="b" style="left:30px;top:0px;width:471px;height:44px;background:#ddeaf3;"></div>
<div class="b" style="left:30px;top:0px;width:0px;height:44px;border-left:1px dashed #c9cfd6;"></div>
<div class="b" style="left:150px;top:0px;width:0px;height:44px;border-left:1px dashed #c9cfd6;"></div>
<div class="b" style="left:270px;top:0px;width:0px;height:44px;border-left:1px dashed #c9cfd6;"></div>
<div class="b" style="left:420px;top:0px;width:0px;height:44px;border-left:1px dashed #c9cfd6;"></div>
</div>
<div class="b" style="left:0;top:221px;width:501px;height:164px;border-bottom:1px solid #cfcfcd;">
<div class="b" style="left:0px;top:0px;width:30px;height:163px;background:#f0f0ee;"></div>
<div class="b" style="left:30px;top:0px;width:471px;height:163px;background:#ddeaf3;"></div>
<div class="b" style="left:30px;top:0px;width:0px;height:163px;border-left:1px dashed #c9cfd6;"></div>
<div class="b" style="left:150px;top:0px;width:0px;height:163px;border-left:1px dashed #c9cfd6;"></div>
<div class="b" style="left:270px;top:0px;width:0px;height:163px;border-left:1px dashed #c9cfd6;"></div>
<div class="b" style="left:420px;top:0px;width:0px;height:163px;border-left:1px dashed #c9cfd6;"></div>
</div>
</div>
<svg class="ic" style="left:871px;top:364.5px" width="13" height="11" viewBox="0 0 13 11"><path d="M1 5.6 L4.6 9.4 L12 1" fill="none" stroke="#9a9a9a" stroke-width="2"/></svg>
<svg class="ic" style="left:900.00px;top:354.00px;filter:drop-shadow(0 0 1.6px #fff)" width="32.00" height="32.00" viewBox="0 0 32 32"><circle cx="16" cy="16" r="12" fill="#4677c6" stroke="#0d0d0d" stroke-width="2.9"/><path d="M5.5 16.5 L9.5 16.5 C11.3 16.5 11.3 8.6 13.1 8.6 C15.1 8.6 15 23.6 17 23.6 C18.8 23.6 18.8 11.6 20.6 11.6 C22 11.6 22.2 16.5 23.6 16.5 L26.5 16.5" fill="none" stroke="#0d0d0d" stroke-width="3.2" stroke-linecap="round" stroke-linejoin="round"/><path d="M5.5 16.5 L9.5 16.5 C11.3 16.5 11.3 8.6 13.1 8.6 C15.1 8.6 15 23.6 17 23.6 C18.8 23.6 18.8 11.6 20.6 11.6 C22 11.6 22.2 16.5 23.6 16.5 L26.5 16.5" fill="none" stroke="#fff" stroke-width="1.4" stroke-linecap="round" stroke-linejoin="round"/></svg>
<svg class="ic" style="left:1020.00px;top:354.00px;filter:drop-shadow(0 0 1.6px #fff)" width="32.00" height="32.00" viewBox="0 0 32 32"><circle cx="16" cy="16" r="12" fill="#f1a136" stroke="#0d0d0d" stroke-width="2.9"/><path d="M16 8 L23.8 21.2 L8.2 21.2 Z" fill="#0d0d0d" stroke="#fff" stroke-width="3.4" stroke-linejoin="round"/><path d="M16 8 L23.8 21.2 L8.2 21.2 Z" fill="#0d0d0d" stroke="#0d0d0d" stroke-width="1.6" stroke-linejoin="round"/><rect x="15.1" y="11.4" width="1.8" height="5.8" fill="#f3a33a"/><rect x="15.1" y="18.4" width="1.8" height="1.9" fill="#f3a33a"/></svg>
<span class="t" id="t88" style="left:1136.40px;top:364.00px;font-size:13px;line-height:16px;color:#111;transform:scaleX(0.9138);-webkit-text-stroke:.4px #111;">check-loop-custom</span>
<div class="b clip" style="left:1281px;top:362.0px;width:80px;height:20px;"><span class="t" id="t89" style="left:5.60px;top:2.00px;font-size:13.5px;line-height:16px;color:#111;transform:scaleX(0.9000);-webkit-text-stroke:.4px #111;">2017-10-11 14:</span></div>
<svg class="ic" style="left:871px;top:452.5px" width="13" height="11" viewBox="0 0 13 11"><path d="M1 5.6 L4.6 9.4 L12 1" fill="none" stroke="#9a9a9a" stroke-width="2"/></svg>
<svg class="ic" style="left:1020.30px;top:436.00px;filter:drop-shadow(0 0 1.6px #fff)" width="40.00" height="40.00" viewBox="0 0 40 40"><circle cx="16" cy="22" r="11.90" fill="#5cb466" stroke="#0d0d0d" stroke-width="2.7"/><path  d="M11 20.1 L16.3 25.4 L29.8 12.2" fill="none" stroke="#fff" stroke-width="6.60" stroke-linecap="round" stroke-linejoin="round"/><path  d="M11 20.1 L16.3 25.4 L29.8 12.2" fill="none" stroke="#0d0d0d" stroke-width="4.30" stroke-linecap="round" stroke-linejoin="round"/></svg>
<span class="t" id="t90" style="left:1136.40px;top:452.00px;font-size:13px;line-height:16px;color:#111;transform:scaleX(0.8986);-webkit-text-stroke:.4px #111;">Scheduler - Running Well</span>
<div class="b clip" style="left:1281px;top:450.0px;width:80px;height:20px;"><span class="t" id="t91" style="left:5.60px;top:2.00px;font-size:13.5px;line-height:16px;color:#111;transform:scaleX(0.9000);-webkit-text-stroke:.4px #111;">2017-10-11 14:</span></div>
<svg class="ic" style="left:871px;top:540.5px" width="13" height="11" viewBox="0 0 13 11"><path d="M1 5.6 L4.6 9.4 L12 1" fill="none" stroke="#9a9a9a" stroke-width="2"/></svg>
<svg class="ic" style="left:1020.30px;top:524.00px;filter:drop-shadow(0 0 1.6px #fff)" width="40.00" height="40.00" viewBox="0 0 40 40"><circle cx="16" cy="22" r="11.90" fill="#5cb466" stroke="#0d0d0d" stroke-width="2.7"/><path  d="M11 20.1 L16.3 25.4 L29.8 12.2" fill="none" stroke="#fff" stroke-width="6.60" stroke-linecap="round" stroke-linejoin="round"/><path  d="M11 20.1 L16.3 25.4 L29.8 12.2" fill="none" stroke="#0d0d0d" stroke-width="4.30" stroke-linecap="round" stroke-linejoin="round"/></svg>
<span class="t" id="t92" style="left:1136.40px;top:540.00px;font-size:13px;line-height:16px;color:#111;transform:scaleX(0.9200);-webkit-text-stroke:.4px #111;">check-metrics</span>
<div class="b clip" style="left:1281px;top:538.0px;width:80px;height:20px;"><span class="t" id="t93" style="left:5.60px;top:2.00px;font-size:13.5px;line-height:16px;color:#111;transform:scaleX(0.9000);-webkit-text-stroke:.4px #111;">2017-10-11 14:</span></div>
<svg class="ic" style="left:871px;top:645.0px" width="13" height="11" viewBox="0 0 13 11"><path d="M1 5.6 L4.6 9.4 L12 1" fill="none" stroke="#9a9a9a" stroke-width="2"/></svg>
<svg class="ic" style="left:1020.30px;top:628.50px;filter:drop-shadow(0 0 1.6px #fff)" width="40.00" height="40.00" viewBox="0 0 40 40"><circle cx="16" cy="22" r="11.90" fill="#5cb466" stroke="#0d0d0d" stroke-width="2.7"/><path  d="M11 20.1 L16.3 25.4 L29.8 12.2" fill="none" stroke="#fff" stroke-width="6.60" stroke-linecap="round" stroke-linejoin="round"/><path  d="M11 20.1 L16.3 25.4 L29.8 12.2" fill="none" stroke="#0d0d0d" stroke-width="4.30" stroke-linecap="round" stroke-linejoin="round"/></svg>
<span class="t" id="t94" style="left:1136.40px;top:645.00px;font-size:13px;line-height:16px;color:#111;transform:scaleX(0.9323);-webkit-text-stroke:.4px #111;">Arbiter - Performance</span>
<div class="b clip" style="left:1281px;top:642.5px;width:80px;height:20px;"><span class="t" id="t95" style="left:5.60px;top:2.50px;font-size:13.5px;line-height:16px;color:#111;transform:scaleX(0.9000);-webkit-text-stroke:.4px #111;">2017-10-11 14:</span></div>
<!-- check detail -->
<div class="b" style="left:1380px;top:241px;width:25px;height:460px;background:#333;box-shadow:-2px 0 5px rgba(0,0,0,.35);"></div>
<svg class="ic" style="left:1387px;top:249px" width="12" height="9" viewBox="0 0 12 9"><path d="M5.4 0.8 L1.4 4.4 L5.4 8 M11 0.8 L7 4.4 L11 8" fill="none" stroke="#fff" stroke-width="2.2"/></svg>
<svg class="ic" style="left:1383px;top:283px" width="20" height="15" viewBox="0 0 20 15"><path d="M10 0 V15" stroke="#fff" stroke-width="2"/><path d="M2 7.5 H7.2 M12.8 7.5 H18" stroke="#fff" stroke-width="2"/><path d="M0 7.5 L5 3.6 V11.4 Z M20 7.5 L15 3.6 V11.4 Z" fill="#fff"/></svg>
<svg class="ic" style="left:1387px;top:324px" width="12" height="9" viewBox="0 0 12 9"><path d="M1.4 0.8 L5.4 4.4 L1.4 8 M7 0.8 L11 4.4 L7 8" fill="none" stroke="#fff" stroke-width="2.2"/></svg>
<svg class="ic" style="left:1387px;top:597.5px" width="12" height="15" viewBox="0 0 12 15"><path d="M2 1.6 L9 7.5 L2 13.4" fill="none" stroke="#fff" stroke-width="2.8" stroke-linejoin="miter"/></svg>
<div class="b" style="left:1405px;top:241px;width:511px;height:460px;background:#454545;"></div>
<div class="b" style="left:1416px;top:247px;width:40px;height:40px;background:#fff;border-radius:4px;box-shadow:1px 2px 3px rgba(0,0,0,.5);"></div>
<svg class="ic" style="left:1420.20px;top:244.59px;filter:drop-shadow(0 0 1.6px #ccc)" width="40.74" height="40.74" viewBox="0 0 40 40"><circle cx="16" cy="22" r="11.90" fill="#5cb466" stroke="#0d0d0d" stroke-width="2.7"/><path  d="M11 20.1 L16.3 25.4 L29.8 12.2" fill="none" stroke="#fff" stroke-width="6.60" stroke-linecap="round" stroke-linejoin="round"/><path  d="M11 20.1 L16.3 25.4 L29.8 12.2" fill="none" stroke="#0d0d0d" stroke-width="4.30" stroke-linecap="round" stroke-linejoin="round"/></svg>
<span class="t" id="t96" style="left:1466.50px;top:250.00px;font-size:30px;line-height:36px;color:#fff;transform:scaleX(0.9190);-webkit-text-stroke:.9px #454545;">CHECK</span>
<span class="t" id="t97" style="left:1573.00px;top:250.00px;font-size:27.5px;line-height:33px;color:#1a98dc;transform:scaleX(0.9250);-webkit-text-stroke:.25px #454545;">[</span>
<span class="t" id="t98" style="left:1585.50px;top:250.00px;font-size:30px;line-height:36px;color:#fff;transform:scaleX(0.8794);-webkit-text-stroke:.9px #454545;">Scheduler - Running Well</span>
<span class="t" id="t99" style="left:1889.40px;top:250.00px;font-size:27.5px;line-height:33px;color:#1a98dc;transform:scaleX(0.9250);-webkit-text-stroke:.25px #454545;">]</span>
<div class="b" style="left:1405px;top:292px;width:511px;height:1px;background:#6a6a6a;"></div>
<span class="t" id="t100" style="left:1416.50px;top:300.00px;font-size:14px;line-height:17px;color:#fff;font-weight:700;transform:scaleX(0.8613);">Vérification précédente</span>
<span class="t" id="t101" style="left:1416.50px;top:317.00px;font-size:14px;line-height:17px;color:#fff;transform:scaleX(0.9183);">il y a 8 secondes</span>
<span class="t" id="t102" style="left:1416.50px;top:334.00px;font-size:14px;line-height:17px;color:#fff;font-weight:700;transform:scaleX(0.8562);">Prochaine vérification</span>
<span class="t" id="t103" style="left:1416.50px;top:351.00px;font-size:14px;line-height:17px;color:#fff;transform:scaleX(0.9342);">dans 52 secondes</span>
<div class="b" style="left:1560px;top:297px;width:2px;height:70px;background:linear-gradient(90deg,#2e2e2e 50%,#5a5a5a 50%);"></div>
<span class="t" id="t104" style="left:1590.00px;top:298.00px;font-size:14px;line-height:17px;color:#fff;font-weight:700;transform:scaleX(0.8460);">Taux d'instabilité</span>
<div class="b" style="left:1617px;top:318.5px;width:42px;height:42px;border:3px solid #fff;border-radius:50%;"></div>
<span class="t" id="t105" style="left:1629.00px;top:331.00px;font-size:14px;line-height:17px;color:#fff;font-weight:700;transform:scaleX(0.9250);">0%</span>
<span class="t" id="t106" style="left:1753.60px;top:298.00px;font-size:14px;line-height:17px;color:#fff;font-weight:700;transform:scaleX(0.8659);">Dernier changement</span>
<svg class="ic" style="left:1768.80px;top:317.30px;filter:drop-shadow(0 0 .8px rgba(255,255,255,.9)) drop-shadow(0 0 2.6px rgba(255,255,255,.5))" width="29.39" height="29.39" viewBox="0 0 32 32"><circle cx="16" cy="16" r="12" fill="#858585" stroke="#0d0d0d" stroke-width="2.9"/><text x="16" y="22.6" text-anchor="middle" font-family="Liberation Sans, sans-serif" font-weight="bold" font-size="18" fill="#0d0d0d" stroke="#fff" stroke-width="2" paint-order="stroke" stroke-linejoin="round">?</text></svg>
<svg class="ic" style="left:1805px;top:325px" width="15" height="14" viewBox="0 0 15 14"><path d="M1.2 7 H11.4 M7.6 2.4 L12.4 7 L7.6 11.6" fill="none" stroke="#fff" stroke-width="2.7" stroke-linecap="round" stroke-linejoin="miter"/></svg>
<svg class="ic" style="left:1825.59px;top:312.33px;filter:drop-shadow(0 0 .8px rgba(255,255,255,.9)) drop-shadow(0 0 2.6px rgba(255,255,255,.5))" width="37.04" height="37.04" viewBox="0 0 40 40"><circle cx="16" cy="22" r="11.90" fill="#5cb466" stroke="#0d0d0d" stroke-width="2.7"/><path  d="M11 20.1 L16.3 25.4 L29.8 12.2" fill="none" stroke="#fff" stroke-width="6.60" stroke-linecap="round" stroke-linejoin="round"/><path  d="M11 20.1 L16.3 25.4 L29.8 12.2" fill="none" stroke="#0d0d0d" stroke-width="4.30" stroke-linecap="round" stroke-linejoin="round"/></svg>
<span class="t" id="t107" style="left:1723.60px;top:351.00px;font-size:14px;line-height:17px;color:#fff;transform:scaleX(1.0149);">depuis 2017-10-11 10:09:29</span>
<div class="b" style="left:1405px;top:371px;width:61px;height:37px;background:radial-gradient(ellipse at 35% 60%,#62c7f3,#2fa8e2 80%);"></div>
<div class="b" style="left:1467px;top:371px;width:121px;height:37px;background:linear-gradient(97deg,#7c756b,#8f887d);"></div>
<div class="b" style="left:1590px;top:371px;width:69px;height:37px;background:linear-gradient(97deg,#7c756b,#8f887d);"></div>
<div class="b" style="left:1466px;top:371px;width:1px;height:37px;background:#d2cdc5;"></div>
<div class="b" style="left:1588px;top:371px;width:1px;height:37px;background:#4a4640;"></div>
<div class="b" style="left:1589px;top:371px;width:1px;height:37px;background:#c9c4bc;"></div>
<span class="t" id="t108" style="left:1420.00px;top:382.00px;font-size:13px;line-height:16px;color:#f8f8f8;transform:scaleX(0.9303);text-shadow:0 1px 1px rgba(0,0,0,.55);-webkit-text-stroke:.4px #f4f4f4;">Gérer</span>
<span class="t" id="t109" style="left:1483.00px;top:382.00px;font-size:13px;line-height:16px;color:#f8f8f8;transform:scaleX(0.9427);text-shadow:0 1px 1px rgba(0,0,0,.55);-webkit-text-stroke:.4px #f4f4f4;">Contacts et Notif</span>
<span class="t" id="t110" style="left:1605.00px;top:382.00px;font-size:13px;line-height:16px;color:#f8f8f8;transform:scaleX(0.9023);text-shadow:0 1px 1px rgba(0,0,0,.55);-webkit-text-stroke:.4px #f4f4f4;">Avancé</span>
<div class="b" style="left:1405px;top:408px;width:511px;height:293px;background:#2fa8e2;"></div>
<div class="b" style="left:1408px;top:411px;width:508px;height:290px;background:#cdcdcd;"></div>
<div class="b tbe" style="left:1416px;top:419px;width:31px;height:27px;"><svg class="ic" style="left:5.5px;top:3.5px" width="20" height="20" viewBox="0 0 20 20"><rect x="1.9" y="3.7" width="16.2" height="14.8" rx="2.2" fill="none" stroke="#3f3f3f" stroke-width="1.7"/><path d="M2 6.7 H18" stroke="#3f3f3f" stroke-width="1.3"/><rect x="4.3" y="1" width="2.7" height="4.4" rx="1.2" fill="#3f3f3f"/><rect x="8.65" y="1" width="2.7" height="4.4" rx="1.2" fill="#3f3f3f"/><rect x="13" y="1" width="2.7" height="4.4" rx="1.2" fill="#3f3f3f"/><text x="10" y="15.9" text-anchor="middle" font-family="Liberation Sans, sans-serif" font-weight="bold" font-size="9.4" letter-spacing="-.4" fill="#3f3f3f">15</text></svg></div>
<div class="b tbe" style="left:1451px;top:419px;width:31px;height:27px;"><svg class="ic" style="left:5.5px;top:3.5px" width="20" height="20" viewBox="0 0 20 20"><circle cx="9.7" cy="10.4" r="8.2" fill="none" stroke="#3f3f3f" stroke-width="1.3"/><path d="M4.6 9.8 L8.8 14.2 L17.4 3.2" fill="none" stroke="#3f3f3f" stroke-width="2.8" stroke-linecap="round" stroke-linejoin="round"/></svg></div>
<div class="b tbd" style="left:1486px;top:419px;width:31px;height:27px;"><svg class="ic" style="left:5.5px;top:3.5px" width="20" height="20" viewBox="0 0 20 20"><path d="M3 17.4 L10.6 9.8" stroke="#7c7c7c" stroke-width="3.2" stroke-linecap="round"/><path d="M10.6 9.8 L17 3.2" stroke="#7c7c7c" stroke-width="1.3" stroke-linecap="round"/><circle cx="17.2" cy="3" r="1" fill="#7c7c7c"/><path d="M6.4 6 L14.2 14" stroke="#7c7c7c" stroke-width="3.2" stroke-linecap="butt"/><path d="M5.4 0.9 A4.3 4.3 0 1 0 9.8 5.4 L6.7 6.3 L4.6 4 Z" fill="#7c7c7c"/><rect x="12.4" y="12.2" width="6.2" height="5" transform="rotate(45 15.5 14.7)" fill="#7c7c7c"/></svg></div>
<div class="b tbe" style="left:1521px;top:419px;width:31px;height:27px;"><svg class="ic" style="left:5.5px;top:3.5px" width="20" height="20" viewBox="0 0 20 20"><path d="M4 7.4 A7.2 7.2 0 1 1 11.8 17.5" fill="none" stroke="#3f3f3f" stroke-width="2.1" stroke-linecap="round"/><path d="M0.8 6.2 L8 6.6 L3.4 12.4 Z" fill="#3f3f3f"/></svg></div>
<div class="b tbe" style="left:1556px;top:419px;width:31px;height:27px;"><svg class="ic" style="left:5.5px;top:3.5px" width="20" height="20" viewBox="0 0 20 20"><path d="M2.6 1.6 V17.8 H18.6" fill="none" stroke="#3f3f3f" stroke-width="2.2" stroke-linecap="round" stroke-linejoin="round"/><path d="M6.2 14.4 L10.2 9.6 L12.8 11.4 L16.6 6" fill="none" stroke="#3f3f3f" stroke-width="2.1" stroke-linecap="round" stroke-linejoin="round"/><path d="M13 3.6 L18.8 2.6 L18 8.4 Z" fill="#3f3f3f"/></svg></div>
<div class="b tbe" style="left:1591px;top:419px;width:31px;height:27px;"><svg class="ic" style="left:5.5px;top:3.5px" width="20" height="20" viewBox="0 0 20 20"><circle cx="10" cy="10.2" r="8" fill="none" stroke="#3f3f3f" stroke-width="1.9"/><path d="M10 4.6 V10.6 H15" fill="none" stroke="#3f3f3f" stroke-width="1.9" stroke-linecap="round" stroke-linejoin="round"/></svg></div>
<div class="b tbd" style="left:1626px;top:419px;width:31px;height:27px;"><svg class="ic" style="left:5.5px;top:3.5px" width="20" height="20" viewBox="0 0 20 20"><path d="M1 13.6 L13.4 1.2 L19 6.8 L8 17.8 L7.4 13.2 Z" fill="#7c7c7c"/></svg></div>
<span class="t" id="t111" style="left:1413.30px;top:466.00px;font-size:14px;line-height:17px;color:#222;font-weight:700;transform:scaleX(0.9101);">Texte de retour :</span>
<div class="b" style="left:1413.5px;top:492px;width:498.5px;height:173px;background:#fff;border:1px solid #a8a8a8;border-radius:4px;"></div>
<span class="t" id="t112" style="left:1424.00px;top:505.00px;font-size:14px;line-height:17px;color:#333;transform:scaleX(0.9810);"><span style="color:#2a9b3c">[OK]</span> Your scheduler is running well.</span>
<span class="t" id="t113" style="left:1424.00px;top:545.00px;font-size:14px;line-height:17px;color:#333;transform:scaleX(0.9660);">Element in the scheduler :</span>
<div class="b" style="left:1424px;top:563px;width:429px;height:51px;background:#000;"></div>
<div class="b" style="left:1425px;top:564px;width:106px;height:24px;background:#dedede;"></div>
<div class="b" style="left:1425px;top:589px;width:106px;height:24px;background:#fff;"></div>
<span class="t" id="t114" style="left:1427.60px;top:568.00px;font-size:14px;line-height:17px;color:#222;font-weight:700;transform:scaleX(0.8846);">Hosts</span>
<span class="t" id="t115" style="left:1427.60px;top:593.00px;font-size:14px;line-height:17px;color:#333;transform:scaleX(1.0000);">4</span>
<div class="b" style="left:1532px;top:564px;width:106px;height:24px;background:#dedede;"></div>
<div class="b" style="left:1532px;top:589px;width:106px;height:24px;background:#fff;"></div>
<span class="t" id="t116" style="left:1534.60px;top:568.00px;font-size:14px;line-height:17px;color:#222;font-weight:700;transform:scaleX(0.9107);">Clusters</span>
<span class="t" id="t117" style="left:1534.60px;top:593.00px;font-size:14px;line-height:17px;color:#333;transform:scaleX(1.0000);">1</span>
<div class="b" style="left:1639px;top:564px;width:106px;height:24px;background:#dedede;"></div>
<div class="b" style="left:1639px;top:589px;width:106px;height:24px;background:#fff;"></div>
<span class="t" id="t118" style="left:1641.60px;top:568.00px;font-size:14px;line-height:17px;color:#222;font-weight:700;transform:scaleX(0.8900);">Checks</span>
<span class="t" id="t119" style="left:1641.60px;top:593.00px;font-size:14px;line-height:17px;color:#333;transform:scaleX(1.0000);">41</span>
<div class="b" style="left:1746px;top:564px;width:106px;height:24px;background:#dedede;"></div>
<div class="b" style="left:1746px;top:589px;width:106px;height:24px;background:#fff;"></div>
<span class="t" id="t120" style="left:1748.60px;top:568.00px;font-size:14px;line-height:17px;color:#222;font-weight:700;transform:scaleX(0.9531);">Total</span>
<span class="t" id="t121" style="left:1748.60px;top:593.00px;font-size:14px;line-height:17px;color:#333;transform:scaleX(1.0000);">46</span>
<span class="t" id="t122" style="left:1424.00px;top:636.00px;font-size:14px;line-height:17px;color:#333;transform:scaleX(0.9708);">Scheduler on realm All.</span>
<span class="t" id="t123" style="left:1413.30px;top:689.00px;font-size:14px;line-height:17px;color:#222;font-weight:700;transform:scaleX(0.9154);">Période de Maintenance :</span>
</div>
</body></html>
